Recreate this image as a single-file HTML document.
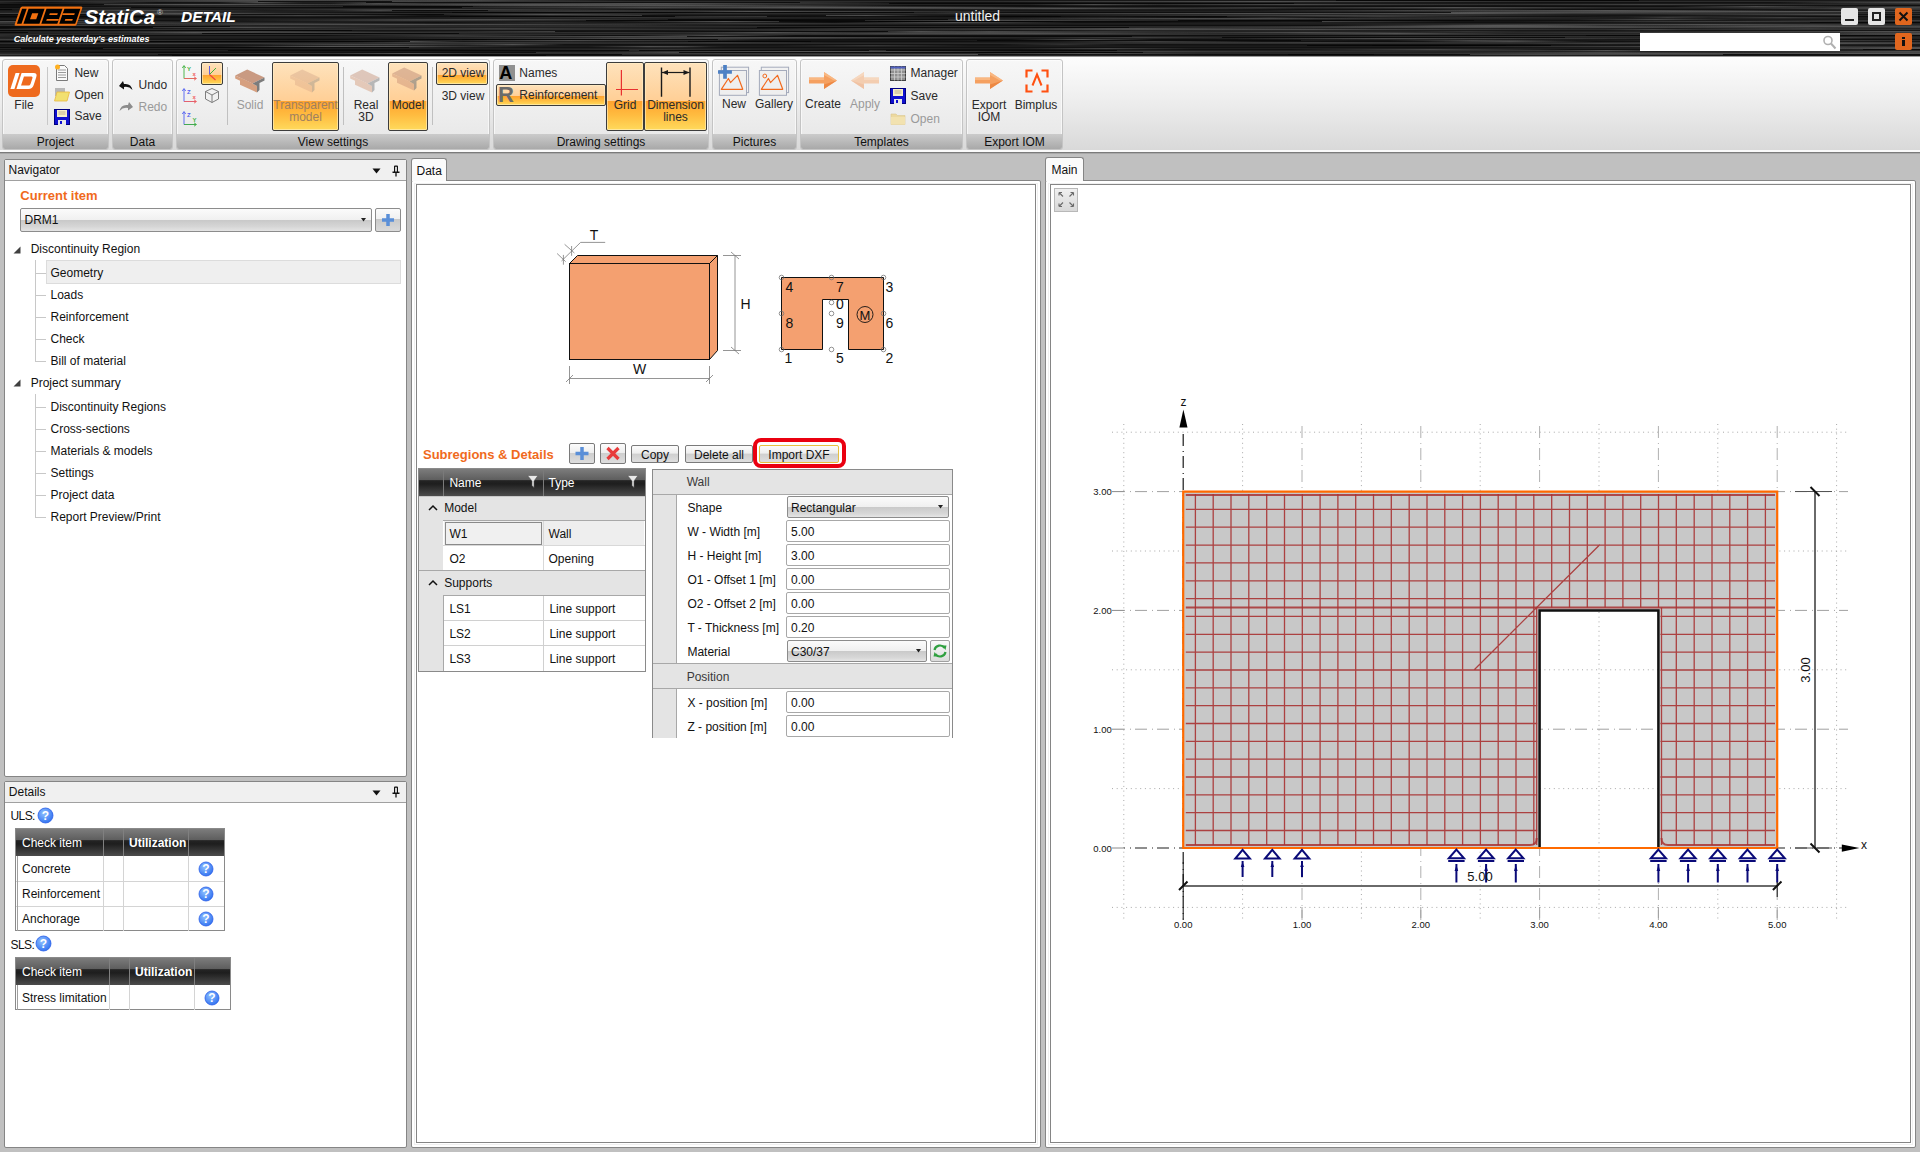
<!DOCTYPE html><html><head><meta charset="utf-8"><title>IDEA StatiCa Detail</title><style>
html,body{margin:0;padding:0}
body{width:1920px;height:1152px;position:relative;overflow:hidden;background:#c0c0c0;font-family:"Liberation Sans",sans-serif;font-size:12px}
.a{position:absolute;box-sizing:border-box}
.t{position:absolute;white-space:nowrap;line-height:normal}
svg.a{overflow:visible}
</style></head><body>
<div class="a" style="left:0px;top:0px;width:1920px;height:56px;background:#1c1c1c;"></div>
<svg class="a" style="left:0px;top:0px;overflow:hidden;" width="1920" height="56" viewBox="0 0 1920 56"><defs><linearGradient id="sg"><stop offset="0" stop-color="#5a5a5a" stop-opacity="0"/><stop offset="0.5" stop-color="#5a5a5a"/><stop offset="1" stop-color="#5a5a5a" stop-opacity="0"/></linearGradient></defs><rect x="0" y="0" width="1920" height="1" fill="rgb(24,24,24)"/><rect x="0" y="1" width="1920" height="1" fill="rgb(44,44,44)"/><rect x="0" y="2" width="1920" height="1" fill="rgb(18,18,18)"/><rect x="0" y="3" width="1920" height="1" fill="rgb(26,26,26)"/><rect x="0" y="4" width="1920" height="1" fill="rgb(34,34,34)"/><rect x="0" y="5" width="1920" height="1" fill="rgb(15,15,15)"/><rect x="0" y="6" width="1920" height="1" fill="rgb(16,16,16)"/><rect x="0" y="7" width="1920" height="1" fill="rgb(40,40,40)"/><rect x="0" y="8" width="1920" height="1" fill="rgb(31,31,31)"/><rect x="0" y="9" width="1920" height="1" fill="rgb(17,17,17)"/><rect x="0" y="10" width="1920" height="1" fill="rgb(25,25,25)"/><rect x="0" y="11" width="1920" height="1" fill="rgb(32,32,32)"/><rect x="0" y="12" width="1920" height="1" fill="rgb(15,15,15)"/><rect x="0" y="13" width="1920" height="1" fill="rgb(43,43,43)"/><rect x="0" y="14" width="1920" height="1" fill="rgb(30,30,30)"/><rect x="0" y="15" width="1920" height="1" fill="rgb(20,20,20)"/><rect x="0" y="16" width="1920" height="1" fill="rgb(15,15,15)"/><rect x="0" y="17" width="1920" height="1" fill="rgb(16,16,16)"/><rect x="0" y="18" width="1920" height="1" fill="rgb(27,27,27)"/><rect x="0" y="19" width="1920" height="1" fill="rgb(27,27,27)"/><rect x="0" y="20" width="1920" height="1" fill="rgb(16,16,16)"/><rect x="0" y="21" width="1920" height="1" fill="rgb(21,21,21)"/><rect x="0" y="22" width="1920" height="1" fill="rgb(16,16,16)"/><rect x="0" y="23" width="1920" height="1" fill="rgb(31,31,31)"/><rect x="0" y="24" width="1920" height="1" fill="rgb(27,27,27)"/><rect x="0" y="25" width="1920" height="1" fill="rgb(15,15,15)"/><rect x="0" y="26" width="1920" height="1" fill="rgb(40,40,40)"/><rect x="0" y="27" width="1920" height="1" fill="rgb(32,32,32)"/><rect x="0" y="28" width="1920" height="1" fill="rgb(17,17,17)"/><rect x="0" y="29" width="1920" height="1" fill="rgb(44,44,44)"/><rect x="0" y="30" width="1920" height="1" fill="rgb(21,21,21)"/><rect x="0" y="31" width="1920" height="1" fill="rgb(34,34,34)"/><rect x="0" y="32" width="1920" height="1" fill="rgb(34,34,34)"/><rect x="0" y="33" width="1920" height="1" fill="rgb(32,32,32)"/><rect x="0" y="34" width="1920" height="1" fill="rgb(44,44,44)"/><rect x="0" y="35" width="1920" height="1" fill="rgb(15,15,15)"/><rect x="0" y="36" width="1920" height="1" fill="rgb(32,32,32)"/><rect x="0" y="37" width="1920" height="1" fill="rgb(32,32,32)"/><rect x="0" y="38" width="1920" height="1" fill="rgb(26,26,26)"/><rect x="0" y="39" width="1920" height="1" fill="rgb(15,15,15)"/><rect x="0" y="40" width="1920" height="1" fill="rgb(21,21,21)"/><rect x="0" y="41" width="1920" height="1" fill="rgb(15,15,15)"/><rect x="0" y="42" width="1920" height="1" fill="rgb(31,31,31)"/><rect x="0" y="43" width="1920" height="1" fill="rgb(41,41,41)"/><rect x="0" y="44" width="1920" height="1" fill="rgb(18,18,18)"/><rect x="0" y="45" width="1920" height="1" fill="rgb(23,23,23)"/><rect x="0" y="46" width="1920" height="1" fill="rgb(27,27,27)"/><rect x="0" y="47" width="1920" height="1" fill="rgb(18,18,18)"/><rect x="0" y="48" width="1920" height="1" fill="rgb(31,31,31)"/><rect x="0" y="49" width="1920" height="1" fill="rgb(17,17,17)"/><rect x="0" y="50" width="1920" height="1" fill="rgb(32,32,32)"/><rect x="0" y="51" width="1920" height="1" fill="rgb(23,23,23)"/><rect x="0" y="52" width="1920" height="1" fill="rgb(31,31,31)"/><rect x="0" y="53" width="1920" height="1" fill="rgb(40,40,40)"/><rect x="0" y="54" width="1920" height="1" fill="rgb(35,35,35)"/><rect x="0" y="55" width="1920" height="1" fill="rgb(19,19,19)"/><rect x="569" y="6" width="461" height="1.3" fill="url(#sg)" opacity="0.63"/><rect x="44" y="4" width="290" height="1.3" fill="url(#sg)" opacity="0.71"/><rect x="1086" y="27" width="556" height="1.3" fill="url(#sg)" opacity="0.52"/><rect x="536" y="15" width="329" height="1.3" fill="url(#sg)" opacity="0.64"/><rect x="1827" y="33" width="431" height="1.3" fill="url(#sg)" opacity="0.47"/><rect x="283" y="4" width="508" height="1.3" fill="url(#sg)" opacity="0.75"/><rect x="1802" y="9" width="511" height="1.3" fill="url(#sg)" opacity="0.88"/><rect x="1085" y="4" width="428" height="1.3" fill="url(#sg)" opacity="0.66"/><rect x="1668" y="37" width="150" height="1.3" fill="url(#sg)" opacity="0.87"/><rect x="66" y="30" width="142" height="1.3" fill="url(#sg)" opacity="0.69"/><rect x="1625" y="43" width="371" height="1.3" fill="url(#sg)" opacity="0.83"/><rect x="-108" y="22" width="552" height="1.3" fill="url(#sg)" opacity="0.40"/><rect x="1822" y="7" width="140" height="1.3" fill="url(#sg)" opacity="0.76"/><rect x="814" y="8" width="487" height="1.3" fill="url(#sg)" opacity="0.85"/><rect x="130" y="31" width="250" height="1.3" fill="url(#sg)" opacity="0.54"/><rect x="360" y="17" width="520" height="1.3" fill="url(#sg)" opacity="0.47"/><rect x="1269" y="26" width="469" height="1.3" fill="url(#sg)" opacity="0.39"/><rect x="419" y="11" width="317" height="1.3" fill="url(#sg)" opacity="0.31"/><rect x="546" y="53" width="349" height="1.3" fill="url(#sg)" opacity="0.30"/><rect x="1312" y="26" width="406" height="1.3" fill="url(#sg)" opacity="0.71"/><rect x="21" y="32" width="547" height="1.3" fill="url(#sg)" opacity="0.54"/><rect x="1414" y="25" width="186" height="1.3" fill="url(#sg)" opacity="0.68"/><rect x="580" y="3" width="148" height="1.3" fill="url(#sg)" opacity="0.56"/><rect x="1192" y="7" width="133" height="1.3" fill="url(#sg)" opacity="0.30"/><rect x="215" y="9" width="452" height="1.3" fill="url(#sg)" opacity="0.34"/><rect x="1341" y="13" width="232" height="1.3" fill="url(#sg)" opacity="0.87"/><rect x="1291" y="38" width="565" height="1.3" fill="url(#sg)" opacity="0.37"/><rect x="1708" y="31" width="571" height="1.3" fill="url(#sg)" opacity="0.49"/><rect x="218" y="9" width="430" height="1.3" fill="url(#sg)" opacity="0.59"/><rect x="461" y="44" width="103" height="1.3" fill="url(#sg)" opacity="0.87"/><rect x="1281" y="33" width="230" height="1.3" fill="url(#sg)" opacity="0.85"/><rect x="1020" y="48" width="173" height="1.3" fill="url(#sg)" opacity="0.61"/><rect x="1256" y="10" width="308" height="1.3" fill="url(#sg)" opacity="0.62"/><rect x="1150" y="32" width="308" height="1.3" fill="url(#sg)" opacity="0.78"/><rect x="1441" y="52" width="312" height="1.3" fill="url(#sg)" opacity="0.61"/><rect x="-82" y="22" width="108" height="1.3" fill="url(#sg)" opacity="0.58"/><rect x="1210" y="12" width="537" height="1.3" fill="url(#sg)" opacity="0.87"/><rect x="129" y="23" width="305" height="1.3" fill="url(#sg)" opacity="0.44"/><rect x="1183" y="12" width="289" height="1.3" fill="url(#sg)" opacity="0.67"/><rect x="-193" y="39" width="570" height="1.3" fill="url(#sg)" opacity="0.78"/><rect x="291" y="5" width="477" height="1.3" fill="url(#sg)" opacity="0.59"/><rect x="1577" y="11" width="420" height="1.3" fill="url(#sg)" opacity="0.78"/><rect x="1421" y="46" width="554" height="1.3" fill="url(#sg)" opacity="0.75"/><rect x="450" y="5" width="254" height="1.3" fill="url(#sg)" opacity="0.32"/><rect x="1706" y="37" width="229" height="1.3" fill="url(#sg)" opacity="0.69"/><rect x="438" y="22" width="214" height="1.3" fill="url(#sg)" opacity="0.31"/><rect x="220" y="46" width="222" height="1.3" fill="url(#sg)" opacity="0.89"/><rect x="664" y="12" width="108" height="1.3" fill="url(#sg)" opacity="0.43"/><rect x="785" y="32" width="413" height="1.3" fill="url(#sg)" opacity="0.63"/><rect x="336" y="53" width="142" height="1.3" fill="url(#sg)" opacity="0.84"/><rect x="1522" y="42" width="593" height="1.3" fill="url(#sg)" opacity="0.62"/><rect x="1891" y="33" width="99" height="1.3" fill="url(#sg)" opacity="0.77"/><rect x="-184" y="38" width="233" height="1.3" fill="url(#sg)" opacity="0.38"/><rect x="292" y="39" width="143" height="1.3" fill="url(#sg)" opacity="0.71"/><rect x="1776" y="33" width="188" height="1.3" fill="url(#sg)" opacity="0.33"/><rect x="934" y="12" width="123" height="1.3" fill="url(#sg)" opacity="0.60"/><rect x="-86" y="35" width="144" height="1.3" fill="url(#sg)" opacity="0.50"/><rect x="1897" y="32" width="284" height="1.3" fill="url(#sg)" opacity="0.57"/><rect x="1758" y="34" width="599" height="1.3" fill="url(#sg)" opacity="0.72"/><rect x="629" y="16" width="538" height="1.3" fill="url(#sg)" opacity="0.55"/><rect x="1610" y="25" width="403" height="1.3" fill="url(#sg)" opacity="0.70"/><rect x="99" y="27" width="297" height="1.3" fill="url(#sg)" opacity="0.77"/><rect x="432" y="49" width="454" height="1.3" fill="url(#sg)" opacity="0.45"/><rect x="1715" y="8" width="304" height="1.3" fill="url(#sg)" opacity="0.54"/><rect x="466" y="31" width="309" height="1.3" fill="url(#sg)" opacity="0.72"/><rect x="1454" y="32" width="427" height="1.3" fill="url(#sg)" opacity="0.42"/><rect x="177" y="20" width="454" height="1.3" fill="url(#sg)" opacity="0.50"/><rect x="1604" y="29" width="98" height="1.3" fill="url(#sg)" opacity="0.50"/><rect x="1010" y="39" width="145" height="1.3" fill="url(#sg)" opacity="0.89"/><rect x="736" y="50" width="187" height="1.3" fill="url(#sg)" opacity="0.46"/><rect x="543" y="2" width="356" height="1.3" fill="url(#sg)" opacity="0.79"/><rect x="859" y="54" width="495" height="1.3" fill="url(#sg)" opacity="0.62"/><rect x="1825" y="32" width="414" height="1.3" fill="url(#sg)" opacity="0.47"/><rect x="550" y="51" width="515" height="1.3" fill="url(#sg)" opacity="0.46"/><rect x="162" y="1" width="346" height="1.3" fill="url(#sg)" opacity="0.66"/><rect x="72" y="14" width="350" height="1.3" fill="url(#sg)" opacity="0.57"/><rect x="1511" y="21" width="354" height="1.3" fill="url(#sg)" opacity="0.33"/><rect x="776" y="45" width="192" height="1.3" fill="url(#sg)" opacity="0.46"/><rect x="626" y="11" width="399" height="1.3" fill="url(#sg)" opacity="0.62"/><rect x="987" y="13" width="536" height="1.3" fill="url(#sg)" opacity="0.70"/><rect x="1221" y="17" width="98" height="1.3" fill="url(#sg)" opacity="0.32"/><rect x="1871" y="1" width="274" height="1.3" fill="url(#sg)" opacity="0.58"/><rect x="235" y="28" width="522" height="1.3" fill="url(#sg)" opacity="0.63"/><rect x="1875" y="25" width="395" height="1.3" fill="url(#sg)" opacity="0.89"/><rect x="613" y="21" width="223" height="1.3" fill="url(#sg)" opacity="0.89"/><rect x="331" y="3" width="94" height="1.3" fill="url(#sg)" opacity="0.68"/><rect x="1564" y="16" width="247" height="1.3" fill="url(#sg)" opacity="0.35"/><rect x="1360" y="53" width="598" height="1.3" fill="url(#sg)" opacity="0.66"/><rect x="1000" y="44" width="126" height="1.3" fill="url(#sg)" opacity="0.41"/><rect x="1626" y="17" width="83" height="1.3" fill="url(#sg)" opacity="0.52"/><rect x="1125" y="21" width="330" height="1.3" fill="url(#sg)" opacity="0.88"/><rect x="692" y="19" width="445" height="1.3" fill="url(#sg)" opacity="0.30"/><rect x="143" y="24" width="566" height="1.3" fill="url(#sg)" opacity="0.60"/><rect x="816" y="12" width="596" height="1.3" fill="url(#sg)" opacity="0.35"/><rect x="167" y="52" width="227" height="1.3" fill="url(#sg)" opacity="0.65"/><rect x="-108" y="25" width="386" height="1.3" fill="url(#sg)" opacity="0.68"/><rect x="435" y="5" width="478" height="1.3" fill="url(#sg)" opacity="0.73"/><rect x="412" y="31" width="370" height="1.3" fill="url(#sg)" opacity="0.33"/><rect x="1558" y="53" width="597" height="1.3" fill="url(#sg)" opacity="0.85"/><rect x="1865" y="48" width="96" height="1.3" fill="url(#sg)" opacity="0.35"/><rect x="345" y="2" width="449" height="1.3" fill="url(#sg)" opacity="0.53"/><rect x="7" y="28" width="99" height="1.3" fill="url(#sg)" opacity="0.71"/><rect x="880" y="31" width="83" height="1.3" fill="url(#sg)" opacity="0.78"/><rect x="1860" y="47" width="174" height="1.3" fill="url(#sg)" opacity="0.34"/><rect x="1740" y="47" width="338" height="1.3" fill="url(#sg)" opacity="0.81"/><rect x="640" y="15" width="316" height="1.3" fill="url(#sg)" opacity="0.60"/><rect x="114" y="24" width="570" height="1.3" fill="url(#sg)" opacity="0.76"/><rect x="612" y="39" width="159" height="1.3" fill="url(#sg)" opacity="0.50"/><rect x="1046" y="41" width="216" height="1.3" fill="url(#sg)" opacity="0.59"/><rect x="900" y="31" width="181" height="1.3" fill="url(#sg)" opacity="0.71"/><rect x="969" y="18" width="555" height="1.3" fill="url(#sg)" opacity="0.58"/><rect x="616" y="7" width="399" height="1.3" fill="url(#sg)" opacity="0.86"/><rect x="986" y="1" width="549" height="1.3" fill="url(#sg)" opacity="0.79"/><rect x="900" y="28" width="476" height="1.3" fill="url(#sg)" opacity="0.85"/><rect x="105" y="13" width="172" height="1.3" fill="url(#sg)" opacity="0.75"/><rect x="1272" y="16" width="215" height="1.3" fill="url(#sg)" opacity="0.47"/><rect x="1295" y="7" width="316" height="1.3" fill="url(#sg)" opacity="0.84"/><rect x="1414" y="31" width="105" height="1.3" fill="url(#sg)" opacity="0.30"/><rect x="1646" y="31" width="495" height="1.3" fill="url(#sg)" opacity="0.74"/><rect x="1208" y="26" width="465" height="1.3" fill="url(#sg)" opacity="0.37"/><rect x="-193" y="21" width="412" height="1.3" fill="url(#sg)" opacity="0.80"/><rect x="601" y="7" width="92" height="1.3" fill="url(#sg)" opacity="0.45"/><rect x="1409" y="4" width="479" height="1.3" fill="url(#sg)" opacity="0.52"/><rect x="927" y="27" width="129" height="1.3" fill="url(#sg)" opacity="0.36"/><rect x="969" y="53" width="232" height="1.3" fill="url(#sg)" opacity="0.88"/><rect x="1892" y="27" width="403" height="1.3" fill="url(#sg)" opacity="0.76"/><rect x="1552" y="50" width="109" height="1.3" fill="url(#sg)" opacity="0.85"/><rect x="633" y="35" width="162" height="1.3" fill="url(#sg)" opacity="0.86"/><rect x="1646" y="26" width="221" height="1.3" fill="url(#sg)" opacity="0.59"/><rect x="321" y="35" width="254" height="1.3" fill="url(#sg)" opacity="0.55"/><rect x="1019" y="18" width="341" height="1.3" fill="url(#sg)" opacity="0.54"/><rect x="1032" y="15" width="574" height="1.3" fill="url(#sg)" opacity="0.70"/><rect x="485" y="7" width="245" height="1.3" fill="url(#sg)" opacity="0.42"/><rect x="1836" y="51" width="305" height="1.3" fill="url(#sg)" opacity="0.84"/><rect x="1643" y="48" width="517" height="1.3" fill="url(#sg)" opacity="0.63"/><rect x="171" y="15" width="258" height="1.3" fill="url(#sg)" opacity="0.63"/><rect x="779" y="20" width="457" height="1.3" fill="url(#sg)" opacity="0.79"/><rect x="-118" y="12" width="502" height="1.3" fill="url(#sg)" opacity="0.55"/><rect x="660" y="33" width="465" height="1.3" fill="url(#sg)" opacity="0.50"/><rect x="1840" y="3" width="364" height="1.3" fill="url(#sg)" opacity="0.38"/><rect x="684" y="32" width="174" height="1.3" fill="url(#sg)" opacity="0.84"/><rect x="1437" y="24" width="536" height="1.3" fill="url(#sg)" opacity="0.87"/><rect x="-111" y="54" width="210" height="1.3" fill="url(#sg)" opacity="0.56"/><rect x="1738" y="48" width="581" height="1.3" fill="url(#sg)" opacity="0.34"/><rect x="1717" y="52" width="539" height="1.3" fill="url(#sg)" opacity="0.77"/><rect x="432" y="14" width="235" height="1.3" fill="url(#sg)" opacity="0.88"/><rect x="1673" y="6" width="167" height="1.3" fill="url(#sg)" opacity="0.77"/><rect x="314" y="0" width="318" height="1.3" fill="url(#sg)" opacity="0.69"/><rect x="324" y="19" width="337" height="1.3" fill="url(#sg)" opacity="0.68"/><rect x="259" y="44" width="181" height="1.3" fill="url(#sg)" opacity="0.48"/><rect x="585" y="37" width="477" height="1.3" fill="url(#sg)" opacity="0.43"/><rect x="-196" y="38" width="90" height="1.3" fill="url(#sg)" opacity="0.48"/><rect x="941" y="29" width="403" height="1.3" fill="url(#sg)" opacity="0.59"/><rect x="811" y="15" width="109" height="1.3" fill="url(#sg)" opacity="0.72"/><rect x="26" y="19" width="102" height="1.3" fill="url(#sg)" opacity="0.60"/><rect x="1520" y="43" width="163" height="1.3" fill="url(#sg)" opacity="0.44"/><rect x="1316" y="27" width="312" height="1.3" fill="url(#sg)" opacity="0.32"/><rect x="1522" y="21" width="451" height="1.3" fill="url(#sg)" opacity="0.42"/><rect x="996" y="51" width="596" height="1.3" fill="url(#sg)" opacity="0.42"/><rect x="1076" y="12" width="278" height="1.3" fill="url(#sg)" opacity="0.58"/><rect x="1008" y="16" width="191" height="1.3" fill="url(#sg)" opacity="0.67"/><rect x="1786" y="14" width="507" height="1.3" fill="url(#sg)" opacity="0.87"/><rect x="1411" y="9" width="135" height="1.3" fill="url(#sg)" opacity="0.31"/><rect x="381" y="38" width="505" height="1.3" fill="url(#sg)" opacity="0.73"/><rect x="1411" y="11" width="540" height="1.3" fill="url(#sg)" opacity="0.74"/><rect x="478" y="5" width="417" height="1.3" fill="url(#sg)" opacity="0.41"/><rect x="1715" y="33" width="112" height="1.3" fill="url(#sg)" opacity="0.70"/><rect x="1331" y="24" width="419" height="1.3" fill="url(#sg)" opacity="0.40"/><rect x="120" y="0" width="366" height="1.3" fill="url(#sg)" opacity="0.51"/><rect x="649" y="7" width="469" height="1.3" fill="url(#sg)" opacity="0.76"/><rect x="1571" y="19" width="169" height="1.3" fill="url(#sg)" opacity="0.72"/><rect x="1326" y="12" width="537" height="1.3" fill="url(#sg)" opacity="0.49"/><rect x="1743" y="47" width="111" height="1.3" fill="url(#sg)" opacity="0.45"/><rect x="1457" y="40" width="121" height="1.3" fill="url(#sg)" opacity="0.32"/><rect x="53" y="4" width="343" height="1.3" fill="url(#sg)" opacity="0.75"/><rect x="1188" y="38" width="451" height="1.3" fill="url(#sg)" opacity="0.50"/><rect x="-22" y="39" width="348" height="1.3" fill="url(#sg)" opacity="0.85"/><rect x="-185" y="19" width="146" height="1.3" fill="url(#sg)" opacity="0.80"/><rect x="1746" y="6" width="556" height="1.3" fill="url(#sg)" opacity="0.77"/><rect x="1821" y="27" width="215" height="1.3" fill="url(#sg)" opacity="0.41"/><rect x="1042" y="51" width="234" height="1.3" fill="url(#sg)" opacity="0.50"/><rect x="1687" y="20" width="450" height="1.3" fill="url(#sg)" opacity="0.61"/><rect x="455" y="25" width="333" height="1.3" fill="url(#sg)" opacity="0.34"/><rect x="1773" y="2" width="413" height="1.3" fill="url(#sg)" opacity="0.89"/><rect x="95" y="6" width="351" height="1.3" fill="url(#sg)" opacity="0.43"/><rect x="1841" y="26" width="537" height="1.3" fill="url(#sg)" opacity="0.44"/><rect x="1687" y="26" width="320" height="1.3" fill="url(#sg)" opacity="0.81"/><rect x="296" y="42" width="380" height="1.3" fill="url(#sg)" opacity="0.47"/><rect x="1327" y="17" width="340" height="1.3" fill="url(#sg)" opacity="0.42"/><rect x="560" y="15" width="331" height="1.3" fill="url(#sg)" opacity="0.39"/><rect x="571" y="37" width="414" height="1.3" fill="url(#sg)" opacity="0.54"/><rect x="1878" y="15" width="316" height="1.3" fill="url(#sg)" opacity="0.69"/><rect x="219" y="2" width="84" height="1.3" fill="url(#sg)" opacity="0.83"/><rect x="1636" y="14" width="462" height="1.3" fill="url(#sg)" opacity="0.83"/><rect x="288" y="14" width="131" height="1.3" fill="url(#sg)" opacity="0.66"/><rect x="595" y="52" width="156" height="1.3" fill="url(#sg)" opacity="0.61"/><rect x="1639" y="11" width="346" height="1.3" fill="url(#sg)" opacity="0.36"/><rect x="1232" y="38" width="302" height="1.3" fill="url(#sg)" opacity="0.52"/><rect x="-20" y="9" width="288" height="1.3" fill="url(#sg)" opacity="0.32"/><rect x="633" y="46" width="91" height="1.3" fill="url(#sg)" opacity="0.55"/><rect x="558" y="23" width="399" height="1.3" fill="url(#sg)" opacity="0.42"/><rect x="1830" y="50" width="575" height="1.3" fill="url(#sg)" opacity="0.54"/><rect x="1419" y="50" width="238" height="1.3" fill="url(#sg)" opacity="0.35"/><rect x="1429" y="10" width="357" height="1.3" fill="url(#sg)" opacity="0.89"/><rect x="1059" y="42" width="507" height="1.3" fill="url(#sg)" opacity="0.49"/><rect x="1263" y="36" width="504" height="1.3" fill="url(#sg)" opacity="0.31"/><rect x="1290" y="49" width="281" height="1.3" fill="url(#sg)" opacity="0.74"/><rect x="-176" y="13" width="524" height="1.3" fill="url(#sg)" opacity="0.55"/><rect x="170" y="52" width="495" height="1.3" fill="url(#sg)" opacity="0.58"/><rect x="332" y="10" width="95" height="1.3" fill="url(#sg)" opacity="0.63"/><rect x="1424" y="41" width="171" height="1.3" fill="url(#sg)" opacity="0.74"/><rect x="397" y="10" width="436" height="1.3" fill="url(#sg)" opacity="0.40"/><rect x="74" y="10" width="191" height="1.3" fill="url(#sg)" opacity="0.59"/><rect x="608" y="51" width="388" height="1.3" fill="url(#sg)" opacity="0.80"/><rect x="1777" y="2" width="402" height="1.3" fill="url(#sg)" opacity="0.66"/><rect x="1388" y="40" width="168" height="1.3" fill="url(#sg)" opacity="0.68"/><rect x="709" y="54" width="494" height="1.3" fill="url(#sg)" opacity="0.80"/><rect x="693" y="11" width="122" height="1.3" fill="url(#sg)" opacity="0.86"/><rect x="1371" y="10" width="447" height="1.3" fill="url(#sg)" opacity="0.39"/><rect x="588" y="46" width="122" height="1.3" fill="url(#sg)" opacity="0.81"/><rect x="-44" y="43" width="411" height="1.3" fill="url(#sg)" opacity="0.53"/><rect x="1054" y="29" width="510" height="1.3" fill="url(#sg)" opacity="0.65"/><rect x="1394" y="27" width="456" height="1.3" fill="url(#sg)" opacity="0.60"/><rect x="-105" y="11" width="83" height="1.3" fill="url(#sg)" opacity="0.58"/><rect x="1677" y="28" width="263" height="1.3" fill="url(#sg)" opacity="0.54"/><rect x="326" y="4" width="447" height="1.3" fill="url(#sg)" opacity="0.52"/><rect x="1610" y="51" width="596" height="1.3" fill="url(#sg)" opacity="0.69"/><rect x="333" y="2" width="164" height="1.3" fill="url(#sg)" opacity="0.77"/><rect x="127" y="32" width="135" height="1.3" fill="url(#sg)" opacity="0.84"/><rect x="357" y="41" width="106" height="1.3" fill="url(#sg)" opacity="0.90"/><rect x="248" y="46" width="278" height="1.3" fill="url(#sg)" opacity="0.89"/><rect x="979" y="31" width="249" height="1.3" fill="url(#sg)" opacity="0.34"/><rect x="833" y="22" width="242" height="1.3" fill="url(#sg)" opacity="0.84"/><rect x="1669" y="17" width="227" height="1.3" fill="url(#sg)" opacity="0.60"/><rect x="653" y="30" width="349" height="1.3" fill="url(#sg)" opacity="0.44"/><rect x="-50" y="23" width="283" height="1.3" fill="url(#sg)" opacity="0.54"/><rect x="939" y="40" width="415" height="1.3" fill="url(#sg)" opacity="0.40"/><rect x="882" y="50" width="197" height="1.3" fill="url(#sg)" opacity="0.33"/><rect x="1273" y="54" width="543" height="1.3" fill="url(#sg)" opacity="0.61"/><rect x="228" y="44" width="338" height="1.3" fill="url(#sg)" opacity="0.68"/><rect x="1321" y="25" width="351" height="1.3" fill="url(#sg)" opacity="0.89"/><rect x="398" y="36" width="448" height="1.3" fill="url(#sg)" opacity="0.76"/><rect x="742" y="28" width="260" height="1.3" fill="url(#sg)" opacity="0.48"/><rect x="838" y="33" width="397" height="1.3" fill="url(#sg)" opacity="0.74"/><rect x="-62" y="47" width="306" height="1.3" fill="url(#sg)" opacity="0.47"/><rect x="1570" y="40" width="507" height="1.3" fill="url(#sg)" opacity="0.52"/><rect x="340" y="3" width="580" height="1.3" fill="url(#sg)" opacity="0.67"/><rect x="-109" y="2" width="135" height="1.3" fill="url(#sg)" opacity="0.64"/><rect x="235" y="19" width="445" height="1.3" fill="url(#sg)" opacity="0.43"/><rect x="1033" y="37" width="216" height="1.3" fill="url(#sg)" opacity="0.52"/><rect x="1745" y="53" width="242" height="1.3" fill="url(#sg)" opacity="0.31"/><rect x="797" y="51" width="232" height="1.3" fill="url(#sg)" opacity="0.36"/><rect x="392" y="40" width="356" height="1.3" fill="url(#sg)" opacity="0.79"/><rect x="29" y="0" width="438" height="1.3" fill="url(#sg)" opacity="0.66"/><rect x="1818" y="33" width="334" height="1.3" fill="url(#sg)" opacity="0.84"/><rect x="52" y="2" width="105" height="1.3" fill="url(#sg)" opacity="0.41"/><rect x="39" y="10" width="187" height="1.3" fill="url(#sg)" opacity="0.67"/><rect x="607" y="42" width="225" height="1.3" fill="url(#sg)" opacity="0.42"/><rect x="1876" y="38" width="505" height="1.3" fill="url(#sg)" opacity="0.61"/><rect x="1029" y="4" width="129" height="1.3" fill="url(#sg)" opacity="0.73"/><rect x="1336" y="0" width="303" height="1" fill="#050505" opacity="0.8"/><rect x="1705" y="47" width="121" height="1" fill="#050505" opacity="0.8"/><rect x="1653" y="47" width="169" height="1" fill="#050505" opacity="0.8"/><rect x="231" y="14" width="213" height="1" fill="#050505" opacity="0.8"/><rect x="-42" y="14" width="143" height="1" fill="#050505" opacity="0.8"/><rect x="878" y="21" width="444" height="1" fill="#050505" opacity="0.8"/><rect x="889" y="3" width="405" height="1" fill="#050505" opacity="0.8"/><rect x="1586" y="35" width="431" height="1" fill="#050505" opacity="0.8"/><rect x="886" y="50" width="231" height="1" fill="#050505" opacity="0.8"/><rect x="688" y="41" width="123" height="1" fill="#050505" opacity="0.8"/><rect x="-138" y="32" width="166" height="1" fill="#050505" opacity="0.8"/><rect x="767" y="16" width="460" height="1" fill="#050505" opacity="0.8"/><rect x="452" y="12" width="462" height="1" fill="#050505" opacity="0.8"/><rect x="586" y="20" width="279" height="1" fill="#050505" opacity="0.8"/><rect x="779" y="21" width="274" height="1" fill="#050505" opacity="0.8"/><rect x="1723" y="54" width="321" height="1" fill="#050505" opacity="0.8"/><rect x="-174" y="53" width="93" height="1" fill="#050505" opacity="0.8"/><rect x="757" y="27" width="372" height="1" fill="#050505" opacity="0.8"/><rect x="668" y="19" width="280" height="1" fill="#050505" opacity="0.8"/><rect x="118" y="39" width="369" height="1" fill="#050505" opacity="0.8"/><rect x="392" y="10" width="96" height="1" fill="#050505" opacity="0.8"/><rect x="258" y="1" width="134" height="1" fill="#050505" opacity="0.8"/><rect x="462" y="39" width="256" height="1" fill="#050505" opacity="0.8"/><rect x="-83" y="9" width="95" height="1" fill="#050505" opacity="0.8"/><rect x="366" y="2" width="434" height="1" fill="#050505" opacity="0.8"/><rect x="-26" y="41" width="436" height="1" fill="#050505" opacity="0.8"/><rect x="-9" y="4" width="113" height="1" fill="#050505" opacity="0.8"/><rect x="1288" y="54" width="182" height="1" fill="#050505" opacity="0.8"/><rect x="70" y="52" width="466" height="1" fill="#050505" opacity="0.8"/><rect x="1372" y="45" width="134" height="1" fill="#050505" opacity="0.8"/><rect x="642" y="15" width="184" height="1" fill="#050505" opacity="0.8"/><rect x="-62" y="7" width="97" height="1" fill="#050505" opacity="0.8"/><rect x="158" y="54" width="464" height="1" fill="#050505" opacity="0.8"/><rect x="977" y="40" width="324" height="1" fill="#050505" opacity="0.8"/><rect x="343" y="6" width="130" height="1" fill="#050505" opacity="0.8"/><rect x="639" y="50" width="230" height="1" fill="#050505" opacity="0.8"/><rect x="1178" y="20" width="296" height="1" fill="#050505" opacity="0.8"/><rect x="-115" y="16" width="259" height="1" fill="#050505" opacity="0.8"/><rect x="957" y="16" width="104" height="1" fill="#050505" opacity="0.8"/><rect x="1307" y="45" width="244" height="1" fill="#050505" opacity="0.8"/><rect x="1863" y="49" width="323" height="1" fill="#050505" opacity="0.8"/><rect x="978" y="54" width="396" height="1" fill="#050505" opacity="0.8"/><rect x="-74" y="47" width="483" height="1" fill="#050505" opacity="0.8"/><rect x="-73" y="26" width="303" height="1" fill="#050505" opacity="0.8"/><rect x="202" y="33" width="257" height="1" fill="#050505" opacity="0.8"/><rect x="-3" y="30" width="355" height="1" fill="#050505" opacity="0.8"/><rect x="687" y="36" width="445" height="1" fill="#050505" opacity="0.8"/><rect x="172" y="55" width="374" height="1" fill="#050505" opacity="0.8"/><rect x="976" y="52" width="167" height="1" fill="#050505" opacity="0.8"/><rect x="-195" y="27" width="348" height="1" fill="#050505" opacity="0.8"/><rect x="981" y="12" width="470" height="1" fill="#050505" opacity="0.8"/><rect x="21" y="48" width="82" height="1" fill="#050505" opacity="0.8"/><rect x="1810" y="22" width="128" height="1" fill="#050505" opacity="0.8"/><rect x="555" y="31" width="333" height="1" fill="#050505" opacity="0.8"/><rect x="1222" y="37" width="343" height="1" fill="#050505" opacity="0.8"/><rect x="450" y="16" width="225" height="1" fill="#050505" opacity="0.8"/><rect x="679" y="52" width="438" height="1" fill="#050505" opacity="0.8"/><rect x="1841" y="14" width="164" height="1" fill="#050505" opacity="0.8"/><rect x="131" y="7" width="331" height="1" fill="#050505" opacity="0.8"/><rect x="228" y="50" width="401" height="1" fill="#050505" opacity="0.8"/></svg>
<svg class="a" style="left:0px;top:0px;" width="100" height="30" viewBox="0 0 100 30"><g transform="translate(0,25.75) skewX(-19)">
<rect x="14.2" y="-19.2" width="62" height="19.2" rx="1.5" fill="#f07010"/>
<rect x="16.2" y="-17.1" width="4.6" height="15" fill="#000"/>
<rect x="22.7" y="-17.1" width="16" height="15" fill="#000"/>
<rect x="27.8" y="-12.6" width="6.2" height="6.2" fill="#f07010"/>
<rect x="40.6" y="-17.1" width="16" height="15" fill="#000"/>
<rect x="45.5" y="-12.6" width="8" height="1.8" fill="#f07010"/>
<rect x="44.5" y="-6.8" width="12.1" height="1.8" fill="#f07010"/>
<rect x="58.5" y="-17.1" width="16" height="15" fill="#000"/>
<rect x="58.5" y="-12.6" width="12" height="1.8" fill="#f07010"/>
<rect x="63" y="-6.8" width="7.5" height="1.8" fill="#f07010"/>
</g></svg>
<div class="t" style="left:84.5px;top:4.8px;font-size:20.5px;color:#fff;font-weight:bold;font-style:italic;">StatiCa</div>
<div class="t" style="left:157.0px;top:7.8px;font-size:8px;color:#ccc;">&reg;</div>
<div class="t" style="left:181.0px;top:7.5px;font-size:15.5px;color:#fff;font-weight:bold;font-style:italic;">DETAIL</div>
<div class="t" style="left:13.7px;top:33.6px;font-size:9px;color:#fff;font-weight:bold;font-style:italic;">Calculate yesterday&#39;s estimates</div>
<div class="t" style="left:877.5px;top:7.8px;width:200px;text-align:center;font-size:14px;color:#f0f0f0;">untitled</div>
<div class="a" style="left:1841px;top:8px;width:17px;height:17px;background:#e6e6e6;border-radius:2px;"></div>
<div class="a" style="left:1845px;top:19px;width:9px;height:2px;background:#222;"></div>
<div class="a" style="left:1868px;top:8px;width:17px;height:17px;background:#e6e6e6;border-radius:2px;"></div>
<div class="a" style="left:1872px;top:12px;width:9px;height:9px;border:2px solid #222;"></div>
<div class="a" style="left:1895px;top:8px;width:17px;height:17px;background:#e0661e;border-radius:2px;"></div>
<svg class="a" style="left:1895px;top:8px;" width="17" height="17" viewBox="0 0 17 17"><path d="M4.5 4.5 L12.5 12.5 M12.5 4.5 L4.5 12.5" stroke="#111" stroke-width="2"/></svg>
<div class="a" style="left:1640px;top:33px;width:200px;height:18px;background:#fff;"></div>
<svg class="a" style="left:1820px;top:33px;" width="20" height="18" viewBox="0 0 20 18"><circle cx="8" cy="7.5" r="4" fill="none" stroke="#b0b0b0" stroke-width="1.6"/><path d="M11 10.5 L15.5 15.5" stroke="#b0b0b0" stroke-width="2"/></svg>
<div class="a" style="left:1895px;top:33px;width:17px;height:17px;background:#e0661e;border-radius:2px;"></div>
<div class="a" style="left:1902px;top:37px;width:3px;height:2px;background:#111;"></div>
<div class="a" style="left:1902px;top:40px;width:3px;height:6px;background:#111;"></div>
<div class="a" style="left:0px;top:56px;width:1920px;height:1px;background:#9a9a9a;"></div>
<div class="a" style="left:0px;top:57px;width:1920px;height:95px;background:linear-gradient(180deg,#fdfdfd 0%,#eeeeee 45%,#d8d8d8 100%);"></div>
<div class="a" style="left:0px;top:150px;width:1920px;height:2px;background:#fafafa;"></div>
<div class="a" style="left:0px;top:152px;width:1920px;height:1px;background:#7a7a7a;"></div>
<div class="a" style="left:0px;top:153px;width:1920px;height:1px;background:#a8a8a8;"></div>
<div class="a" style="left:2px;top:59px;width:107px;height:91px;border:1px solid #c4c4c4;border-radius:3px;background:linear-gradient(180deg,#f7f7f7 0%,#efefef 50%,#e6e6e6 100%);box-shadow:inset 0 0 0 1px rgba(255,255,255,0.6);"></div>
<div class="a" style="left:3px;top:134px;width:105px;height:15px;background:linear-gradient(180deg,#cbcbcb,#a9a9a9);border-radius:0 0 2px 2px;"></div>
<div class="t" style="left:-44.5px;top:135.3px;width:200px;text-align:center;font-size:12px;color:#111;">Project</div>
<div class="a" style="left:112px;top:59px;width:61px;height:91px;border:1px solid #c4c4c4;border-radius:3px;background:linear-gradient(180deg,#f7f7f7 0%,#efefef 50%,#e6e6e6 100%);box-shadow:inset 0 0 0 1px rgba(255,255,255,0.6);"></div>
<div class="a" style="left:113px;top:134px;width:59px;height:15px;background:linear-gradient(180deg,#cbcbcb,#a9a9a9);border-radius:0 0 2px 2px;"></div>
<div class="t" style="left:42.5px;top:135.3px;width:200px;text-align:center;font-size:12px;color:#111;">Data</div>
<div class="a" style="left:176px;top:59px;width:314px;height:91px;border:1px solid #c4c4c4;border-radius:3px;background:linear-gradient(180deg,#f7f7f7 0%,#efefef 50%,#e6e6e6 100%);box-shadow:inset 0 0 0 1px rgba(255,255,255,0.6);"></div>
<div class="a" style="left:177px;top:134px;width:312px;height:15px;background:linear-gradient(180deg,#cbcbcb,#a9a9a9);border-radius:0 0 2px 2px;"></div>
<div class="t" style="left:233.0px;top:135.3px;width:200px;text-align:center;font-size:12px;color:#111;">View settings</div>
<div class="a" style="left:493px;top:59px;width:216px;height:91px;border:1px solid #c4c4c4;border-radius:3px;background:linear-gradient(180deg,#f7f7f7 0%,#efefef 50%,#e6e6e6 100%);box-shadow:inset 0 0 0 1px rgba(255,255,255,0.6);"></div>
<div class="a" style="left:494px;top:134px;width:214px;height:15px;background:linear-gradient(180deg,#cbcbcb,#a9a9a9);border-radius:0 0 2px 2px;"></div>
<div class="t" style="left:501.0px;top:135.3px;width:200px;text-align:center;font-size:12px;color:#111;">Drawing settings</div>
<div class="a" style="left:712px;top:59px;width:85px;height:91px;border:1px solid #c4c4c4;border-radius:3px;background:linear-gradient(180deg,#f7f7f7 0%,#efefef 50%,#e6e6e6 100%);box-shadow:inset 0 0 0 1px rgba(255,255,255,0.6);"></div>
<div class="a" style="left:713px;top:134px;width:83px;height:15px;background:linear-gradient(180deg,#cbcbcb,#a9a9a9);border-radius:0 0 2px 2px;"></div>
<div class="t" style="left:654.5px;top:135.3px;width:200px;text-align:center;font-size:12px;color:#111;">Pictures</div>
<div class="a" style="left:800px;top:59px;width:163px;height:91px;border:1px solid #c4c4c4;border-radius:3px;background:linear-gradient(180deg,#f7f7f7 0%,#efefef 50%,#e6e6e6 100%);box-shadow:inset 0 0 0 1px rgba(255,255,255,0.6);"></div>
<div class="a" style="left:801px;top:134px;width:161px;height:15px;background:linear-gradient(180deg,#cbcbcb,#a9a9a9);border-radius:0 0 2px 2px;"></div>
<div class="t" style="left:781.5px;top:135.3px;width:200px;text-align:center;font-size:12px;color:#111;">Templates</div>
<div class="a" style="left:966px;top:59px;width:97px;height:91px;border:1px solid #c4c4c4;border-radius:3px;background:linear-gradient(180deg,#f7f7f7 0%,#efefef 50%,#e6e6e6 100%);box-shadow:inset 0 0 0 1px rgba(255,255,255,0.6);"></div>
<div class="a" style="left:967px;top:134px;width:95px;height:15px;background:linear-gradient(180deg,#cbcbcb,#a9a9a9);border-radius:0 0 2px 2px;"></div>
<div class="t" style="left:914.5px;top:135.3px;width:200px;text-align:center;font-size:12px;color:#111;">Export IOM</div>
<svg class="a" style="left:8px;top:65px;" width="32" height="32" viewBox="0 0 32 32"><rect x="0" y="0" width="32" height="32" rx="5" fill="#ee6a1e"/><g transform="translate(16,16) skewX(-18)"><rect x="-11" y="-8" width="4" height="16" fill="#fff"/><path d="M-5 -8 H7 Q11 -8 11 -4 V4 Q11 8 7 8 H-5 Z M-1.5 -4.5 V4.5 H6 Q7.5 4.5 7.5 3 V-3 Q7.5 -4.5 6 -4.5 Z" fill="#fff" fill-rule="evenodd"/></g></svg>
<div class="t" style="left:-76.0px;top:97.8px;width:200px;text-align:center;font-size:12px;color:#2a2a2a;">File</div>
<div class="a" style="left:47px;top:67px;width:1px;height:58px;background:#c8c8c8;"></div>
<svg class="a" style="left:54px;top:64px;" width="16" height="17" viewBox="0 0 16 17"><path d="M2.5 1.5 H10.5 L13.5 4.5 V16.5 H2.5 Z" fill="#fafafa" stroke="#7a7a7a"/><path d="M4 6 H12 M4 8.5 H12 M4 11 H12 M4 13.5 H12" stroke="#9a9a9a"/><circle cx="3.5" cy="3" r="2.5" fill="#ffb020"/></svg>
<div class="t" style="left:74.4px;top:65.6px;font-size:12px;color:#2a2a2a;">New</div>
<svg class="a" style="left:54px;top:87px;" width="16" height="15" viewBox="0 0 16 15"><rect x="1" y="1" width="10" height="8" fill="#b8b8b8"/><path d="M3 5 H15.5 L13 14 H0.5 Z" fill="#f2e070" stroke="#e8b840" stroke-width="0.8"/></svg>
<div class="t" style="left:74.4px;top:87.5px;font-size:12px;color:#2a2a2a;">Open</div>
<svg class="a" style="left:54px;top:109px;" width="16" height="16" viewBox="0 0 16 16"><rect x="0.5" y="0.5" width="15" height="15" fill="#1010d0" stroke="#000080"/><rect x="3" y="1" width="10" height="7" fill="#f8f0c8"/><path d="M4.5 3 H11.5 M4.5 5 H11.5" stroke="#b0a080" stroke-width="0.8"/><rect x="4" y="11" width="8" height="5" fill="#e8e8e8"/><rect x="6" y="12" width="2" height="3" fill="#1010d0"/></svg>
<div class="t" style="left:74.4px;top:109.3px;font-size:12px;color:#2a2a2a;">Save</div>
<svg class="a" style="left:118px;top:80px;" width="16" height="11" viewBox="0 0 16 11"><path d="M5 1 L1 6 L6 9.5 L6 7 Q11 6 14.5 10 Q13 3 6 4 Z" fill="#111"/></svg>
<div class="t" style="left:138.5px;top:78.2px;font-size:12px;color:#2a2a2a;">Undo</div>
<svg class="a" style="left:118px;top:101px;" width="16" height="11" viewBox="0 0 16 11"><path d="M11 1 L15 6 L10 9.5 L10 7 Q5 6 1.5 10 Q3 3 10 4 Z" fill="#8c8c8c"/></svg>
<div class="t" style="left:138.5px;top:99.8px;font-size:12px;color:#9a9a9a;">Redo</div>
<svg class="a" style="left:181px;top:64px;" width="17" height="17" viewBox="0 0 17 17"><path d="M3 2 V14.5 H15" fill="none" stroke="#40b040" stroke-width="0.9"/><path d="M3 14.5 H15" stroke="#f06060" stroke-width="0.9"/><path d="M1.3 4 L3 1.5 L4.7 4" fill="none" stroke="#40b040" stroke-width="0.9"/><path d="M13 12.8 L15.5 14.5 L13 16.2" fill="none" stroke="#f06060" stroke-width="0.9"/><text x="6" y="6.5" font-size="6" font-weight="bold" fill="#40b040" font-family="Liberation Sans">Y</text><text x="11.5" y="12" font-size="6" font-weight="bold" fill="#f06060" font-family="Liberation Sans">x</text></svg>
<svg class="a" style="left:181px;top:87px;" width="17" height="17" viewBox="0 0 17 17"><path d="M3 2 V14.5 H15" fill="none" stroke="#5060f0" stroke-width="0.9"/><path d="M3 14.5 H15" stroke="#f06060" stroke-width="0.9"/><path d="M1.3 4 L3 1.5 L4.7 4" fill="none" stroke="#5060f0" stroke-width="0.9"/><path d="M13 12.8 L15.5 14.5 L13 16.2" fill="none" stroke="#f06060" stroke-width="0.9"/><text x="6" y="6.5" font-size="6" font-weight="bold" fill="#5060f0" font-family="Liberation Sans">Z</text><text x="11.5" y="12" font-size="6" font-weight="bold" fill="#f06060" font-family="Liberation Sans">x</text></svg>
<svg class="a" style="left:181px;top:110px;" width="17" height="17" viewBox="0 0 17 17"><path d="M3 2 V14.5 H15" fill="none" stroke="#5060f0" stroke-width="0.9"/><path d="M3 14.5 H15" stroke="#40b040" stroke-width="0.9"/><path d="M1.3 4 L3 1.5 L4.7 4" fill="none" stroke="#5060f0" stroke-width="0.9"/><path d="M13 12.8 L15.5 14.5 L13 16.2" fill="none" stroke="#40b040" stroke-width="0.9"/><text x="6" y="6.5" font-size="6" font-weight="bold" fill="#5060f0" font-family="Liberation Sans">Z</text><text x="11.5" y="12" font-size="6" font-weight="bold" fill="#40b040" font-family="Liberation Sans">Y</text></svg>
<div class="a" style="left:201px;top:62px;width:22px;height:23px;border:1px solid #3c3c3c;border-radius:2px;background:linear-gradient(180deg,#fee2bc 0%,#ffcf96 56%,#ffa22e 56%,#ffbc40 78%,#ffda5c 100%);box-shadow:inset 0 0 0 1px rgba(255,240,200,0.6);"></div>
<svg class="a" style="left:201px;top:62px;" width="22" height="23" viewBox="0 0 22 23"><path d="M8.5 4 V12.5" stroke="#6060e0" stroke-width="1"/><path d="M8.5 12.5 L15 6" stroke="#40b040" stroke-width="1"/><path d="M8.5 12.5 L14.5 18" stroke="#f04040" stroke-width="1.1"/></svg>
<svg class="a" style="left:204px;top:87px;" width="16" height="17" viewBox="0 0 16 17"><path d="M8 1.5 L14.5 4.5 V12 L8 15.5 L1.5 12 V4.5 Z M1.5 4.5 L8 8 L14.5 4.5 M8 8 V15.5" fill="none" stroke="#707070" stroke-width="0.9"/></svg>
<div class="a" style="left:227px;top:67px;width:1px;height:58px;background:#c0c0c0;"></div>
<svg class="a" style="left:235px;top:68px;" width="32" height="26" viewBox="0 0 32 26"><g opacity="1.0"><path d="M0.2 7.5 L12.2 1.5 L29.5 9.5 L17.5 15.5 Z" fill="#c99a82"/><path d="M0.2 7.5 L17.5 15.5 V18.5 L0.2 10.5 Z" fill="#d6a080"/><path d="M5 9.8 L22 17.8 V24.5 L5 16.8 Z" fill="#d6a080"/><path d="M17.5 15.5 L29.5 9.5 V12.5 L24.5 15 V22 L22 24.5 V18 Z" fill="#7c7c7c"/></g></svg>
<div class="t" style="left:150.0px;top:97.7px;width:200px;text-align:center;font-size:12px;color:#9a9a9a;">Solid</div>
<div class="a" style="left:272px;top:62px;width:67px;height:69px;border:1px solid #3c3c3c;border-radius:2px;background:linear-gradient(180deg,#fee2bc 0%,#ffcf96 56%,#ffa22e 56%,#ffbc40 78%,#ffda5c 100%);box-shadow:inset 0 0 0 1px rgba(255,240,200,0.6);"></div>
<svg class="a" style="left:290px;top:68px;" width="32" height="26" viewBox="0 0 32 26"><g opacity="0.35"><path d="M0.2 7.5 L12.2 1.5 L29.5 9.5 L17.5 15.5 Z" fill="#c99a82"/><path d="M0.2 7.5 L17.5 15.5 V18.5 L0.2 10.5 Z" fill="#d6a080"/><path d="M5 9.8 L22 17.8 V24.5 L5 16.8 Z" fill="#d6a080"/><path d="M17.5 15.5 L29.5 9.5 V12.5 L24.5 15 V22 L22 24.5 V18 Z" fill="#7c7c7c"/></g></svg>
<div class="t" style="left:205.5px;top:97.7px;width:200px;text-align:center;font-size:12px;color:#a08060;">Transparent</div>
<div class="t" style="left:205.5px;top:109.6px;width:200px;text-align:center;font-size:12px;color:#a08060;">model</div>
<div class="a" style="left:343px;top:67px;width:1px;height:58px;background:#c0c0c0;"></div>
<svg class="a" style="left:350px;top:68px;" width="32" height="26" viewBox="0 0 32 26"><g opacity="0.5"><path d="M0.2 7.5 L12.2 1.5 L29.5 9.5 L17.5 15.5 Z" fill="#c99a82"/><path d="M0.2 7.5 L17.5 15.5 V18.5 L0.2 10.5 Z" fill="#d6a080"/><path d="M5 9.8 L22 17.8 V24.5 L5 16.8 Z" fill="#d6a080"/><path d="M17.5 15.5 L29.5 9.5 V12.5 L24.5 15 V22 L22 24.5 V18 Z" fill="#7c7c7c"/></g></svg>
<div class="t" style="left:266.0px;top:97.7px;width:200px;text-align:center;font-size:12px;color:#2a2a2a;">Real</div>
<div class="t" style="left:266.0px;top:109.6px;width:200px;text-align:center;font-size:12px;color:#2a2a2a;">3D</div>
<div class="a" style="left:388px;top:62px;width:40px;height:69px;border:1px solid #3c3c3c;border-radius:2px;background:linear-gradient(180deg,#fee2bc 0%,#ffcf96 56%,#ffa22e 56%,#ffbc40 78%,#ffda5c 100%);box-shadow:inset 0 0 0 1px rgba(255,240,200,0.6);"></div>
<svg class="a" style="left:392px;top:66px;" width="32" height="26" viewBox="0 0 32 26"><g opacity="0.6"><path d="M0.2 7.5 L12.2 1.5 L29.5 9.5 L17.5 15.5 Z" fill="#c99a82"/><path d="M0.2 7.5 L17.5 15.5 V18.5 L0.2 10.5 Z" fill="#d6a080"/><path d="M5 9.8 L22 17.8 V24.5 L5 16.8 Z" fill="#d6a080"/><path d="M17.5 15.5 L29.5 9.5 V12.5 L24.5 15 V22 L22 24.5 V18 Z" fill="#7c7c7c"/></g></svg>
<div class="t" style="left:308.0px;top:97.7px;width:200px;text-align:center;font-size:12px;color:#2a2a2a;">Model</div>
<div class="a" style="left:432px;top:67px;width:1px;height:58px;background:#c0c0c0;"></div>
<div class="a" style="left:436px;top:62px;width:52px;height:23px;border:1px solid #3c3c3c;border-radius:2px;background:linear-gradient(180deg,#fee2bc 0%,#ffcf96 56%,#ffa22e 56%,#ffbc40 78%,#ffda5c 100%);box-shadow:inset 0 0 0 1px rgba(255,240,200,0.6);"></div>
<div class="t" style="left:363.0px;top:65.9px;width:200px;text-align:center;font-size:12px;color:#2a2a2a;">2D view</div>
<div class="t" style="left:363.0px;top:89.1px;width:200px;text-align:center;font-size:12px;color:#2a2a2a;">3D view</div>
<div class="a" style="left:499px;top:65px;width:16px;height:16px;background:#909090;"></div>
<div class="t" style="left:499.3px;top:62.9px;font-size:18px;color:#000;font-weight:bold;">A</div>
<div class="t" style="left:519.3px;top:66.1px;font-size:12px;color:#2a2a2a;">Names</div>
<div class="a" style="left:496px;top:84px;width:110px;height:22px;border:1px solid #3c3c3c;border-radius:2px;background:linear-gradient(180deg,#fee2bc 0%,#ffcf96 56%,#ffa22e 56%,#ffbc40 78%,#ffda5c 100%);box-shadow:inset 0 0 0 1px rgba(255,240,200,0.6);"></div>
<div class="t" style="left:498.0px;top:82.4px;font-size:22px;color:#6a6a6a;font-weight:bold;">R</div>
<div class="t" style="left:519.3px;top:88.4px;font-size:12px;color:#2a2a2a;">Reinforcement</div>
<div class="a" style="left:606px;top:62px;width:38px;height:69px;border:1px solid #3c3c3c;border-radius:2px;background:linear-gradient(180deg,#fee2bc 0%,#ffcf96 56%,#ffa22e 56%,#ffbc40 78%,#ffda5c 100%);box-shadow:inset 0 0 0 1px rgba(255,240,200,0.6);"></div>
<svg class="a" style="left:606px;top:62px;" width="38" height="40" viewBox="0 0 38 40"><path d="M15.4 8 V33.5 M10 27.5 H32" stroke="#e83030" stroke-width="1.2"/></svg>
<div class="t" style="left:525.0px;top:97.7px;width:200px;text-align:center;font-size:12px;color:#2a2a2a;">Grid</div>
<div class="a" style="left:644px;top:62px;width:63px;height:69px;border:1px solid #3c3c3c;border-radius:2px;background:linear-gradient(180deg,#fee2bc 0%,#ffcf96 56%,#ffa22e 56%,#ffbc40 78%,#ffda5c 100%);box-shadow:inset 0 0 0 1px rgba(255,240,200,0.6);"></div>
<svg class="a" style="left:644px;top:62px;" width="63" height="40" viewBox="0 0 63 40"><path d="M17.5 5.4 V34.7 M46 5.4 V34.7" stroke="#1a1a1a" stroke-width="1.4"/><path d="M18 10.5 H45.5" stroke="#1a1a1a" stroke-width="1.2"/><path d="M18 10.5 L24 8 V13 Z M45.5 10.5 L39.5 8 V13 Z" fill="#1a1a1a"/></svg>
<div class="t" style="left:575.5px;top:97.7px;width:200px;text-align:center;font-size:12px;color:#2a2a2a;">Dimension</div>
<div class="t" style="left:575.5px;top:109.6px;width:200px;text-align:center;font-size:12px;color:#2a2a2a;">lines</div>
<svg class="a" style="left:714px;top:62px;" width="80" height="38" viewBox="0 0 80 38"><g transform="translate(0,0)"><rect x="7.3" y="5.2" width="27.3" height="25.4" fill="#f2f2f2" stroke="#a4aabb" stroke-width="1"/><rect x="5.4" y="8.5" width="27.1" height="24.8" fill="#efefef" stroke="#a4aabb" stroke-width="1"/><path d="M7.3 27.3 L14.4 16.5 L16.5 20.6 L23.5 13.3 L28.75 27.3 Z" fill="none" stroke="#f26a1e" stroke-width="1.2" stroke-linejoin="round"/><path d="M11 3.1 V16.7 M4 10 H17.9" stroke="#4d80c4" stroke-width="3.7"/></g><g transform="translate(40,0)"><rect x="7.3" y="5.2" width="27.3" height="25.4" fill="#f2f2f2" stroke="#a4aabb" stroke-width="1"/><rect x="5.4" y="8.5" width="27.1" height="24.8" fill="#efefef" stroke="#a4aabb" stroke-width="1"/><path d="M7.3 27.3 L14.4 16.5 L16.5 20.6 L23.5 13.3 L28.75 27.3 Z" fill="none" stroke="#f26a1e" stroke-width="1.2" stroke-linejoin="round"/><circle cx="10.8" cy="14" r="1.9" fill="none" stroke="#f26a1e" stroke-width="1"/></g></svg>
<div class="t" style="left:634.0px;top:97.2px;width:200px;text-align:center;font-size:12px;color:#2a2a2a;">New</div>
<div class="t" style="left:674.0px;top:97.2px;width:200px;text-align:center;font-size:12px;color:#2a2a2a;">Gallery</div>
<svg class="a" style="left:808px;top:71px;" width="30" height="19" viewBox="0 0 30 19"><g  opacity="1.0"><path d="M1 6.5 H16 V1 L29 9.5 L16 18 V12.5 H1 Z" fill="#f5a060"/><path d="M1 6.5 H16 V1 L29 9.5 L26 9.5 L16 4 V9 H1 Z" fill="#fbc090" opacity="0.7"/><path d="M16 18 L29 9.5 L16 13.5 Z" fill="#e87830" opacity="0.6"/></g></svg>
<div class="t" style="left:723.0px;top:97.2px;width:200px;text-align:center;font-size:12px;color:#2a2a2a;">Create</div>
<svg class="a" style="left:850px;top:71px;" width="30" height="19" viewBox="0 0 30 19"><g transform="translate(30,0) scale(-1,1)" opacity="0.45"><path d="M1 6.5 H16 V1 L29 9.5 L16 18 V12.5 H1 Z" fill="#f5a060"/><path d="M1 6.5 H16 V1 L29 9.5 L26 9.5 L16 4 V9 H1 Z" fill="#fbc090" opacity="0.7"/><path d="M16 18 L29 9.5 L16 13.5 Z" fill="#e87830" opacity="0.6"/></g></svg>
<div class="t" style="left:765.0px;top:97.2px;width:200px;text-align:center;font-size:12px;color:#9a9a9a;">Apply</div>
<svg class="a" style="left:890px;top:66px;" width="16" height="15" viewBox="0 0 16 15"><rect x="0.5" y="0.5" width="15" height="14" fill="#909090" stroke="#404040"/><path d="M0.5 4 H15.5 M0.5 7.5 H15.5 M0.5 11 H15.5 M4.5 0.5 V14.5 M8 0.5 V14.5 M11.5 0.5 V14.5" stroke="#d0d0d0" stroke-width="0.8"/><rect x="0.5" y="0.5" width="15" height="2" fill="#5060c0"/></svg>
<div class="t" style="left:910.5px;top:66.1px;font-size:12px;color:#2a2a2a;">Manager</div>
<svg class="a" style="left:890px;top:88px;" width="16" height="16" viewBox="0 0 16 16"><rect x="0.5" y="0.5" width="15" height="15" fill="#1010d0" stroke="#000080"/><rect x="3" y="1" width="10" height="7" fill="#f8f0c8"/><path d="M4.5 3 H11.5 M4.5 5 H11.5" stroke="#b0a080" stroke-width="0.8"/><rect x="4" y="11" width="8" height="5" fill="#e8e8e8"/><rect x="6" y="12" width="2" height="3" fill="#1010d0"/></svg>
<div class="t" style="left:910.5px;top:88.6px;font-size:12px;color:#2a2a2a;">Save</div>
<svg class="a" style="left:890px;top:112px;" width="16" height="13" viewBox="0 0 16 13"><path d="M1 2 H6 L7.5 3.5 H15 V12.5 H1 Z" fill="#ecd9a0" stroke="#dcc890" stroke-width="0.6"/><path d="M1 5 H15 V12.5 H1 Z" fill="#f2e2b0"/></svg>
<div class="t" style="left:910.5px;top:111.6px;font-size:12px;color:#9a9a9a;">Open</div>
<svg class="a" style="left:974px;top:71px;" width="30" height="19" viewBox="0 0 30 19"><g  opacity="1.0"><path d="M1 6.5 H16 V1 L29 9.5 L16 18 V12.5 H1 Z" fill="#f5a060"/><path d="M1 6.5 H16 V1 L29 9.5 L26 9.5 L16 4 V9 H1 Z" fill="#fbc090" opacity="0.7"/><path d="M16 18 L29 9.5 L16 13.5 Z" fill="#e87830" opacity="0.6"/></g></svg>
<div class="t" style="left:889.0px;top:97.6px;width:200px;text-align:center;font-size:12px;color:#2a2a2a;">Export</div>
<div class="t" style="left:889.0px;top:109.8px;width:200px;text-align:center;font-size:12px;color:#2a2a2a;">IOM</div>
<svg class="a" style="left:1025px;top:69px;" width="24" height="24" viewBox="0 0 24 24"><path d="M7.5 1.5 H1.5 V8.5 M16.5 1.5 H22.5 V8.5 M1.5 15.5 V22.5 H7.5 M22.5 15.5 V22.5 H16.5" fill="none" stroke="#ff5010" stroke-width="2.2"/><path d="M7.5 16.5 L12 5.5 L16.5 16.5" fill="none" stroke="#ff5010" stroke-width="2"/></svg>
<div class="t" style="left:936.0px;top:97.6px;width:200px;text-align:center;font-size:12px;color:#2a2a2a;">Bimplus</div>
<div class="a" style="left:4px;top:159px;width:403px;height:618px;border:1px solid #858585;border-radius:2px;background:#fff;"></div>
<div class="a" style="left:5px;top:160px;width:401px;height:20px;background:#f0f0f0;"></div>
<div class="a" style="left:5px;top:180px;width:401px;height:1px;background:#a0a0a0;"></div>
<div class="t" style="left:8.5px;top:163.1px;font-size:12px;color:#111;">Navigator</div>
<svg class="a" style="left:372px;top:167.5px;" width="9" height="6" viewBox="0 0 9 6"><path d="M0.5 0.5 H8.5 L4.5 5.5 Z" fill="#111"/></svg>
<svg class="a" style="left:391px;top:165px;" width="10" height="12" viewBox="0 0 10 12"><path d="M3 1.5 Q3 0.5 4 0.5 H6 Q7 0.5 7 1.5 V6.5 H8.5 V8 H1.5 V6.5 H3 Z" fill="#111"/><rect x="4.2" y="1.8" width="1.6" height="4.7" fill="#fff"/><path d="M5 8 V11.5" stroke="#111" stroke-width="1.3"/></svg>
<div class="t" style="left:20.3px;top:188.0px;font-size:13px;color:#f06a1c;font-weight:bold;">Current item</div>
<div class="a" style="left:20px;top:208px;width:352px;height:24px;border:1px solid #8c8c8c;border-radius:2px;background:linear-gradient(180deg,#fbfbfb 0%,#f0f0f0 50%,#c9c9c9 52%,#d6d6d6 80%,#e4e4e4 100%);"></div>
<div class="t" style="left:24.5px;top:212.9px;font-size:12px;color:#111;">DRM1</div>
<svg class="a" style="left:361px;top:218px;" width="6" height="4" viewBox="0 0 6 4"><path d="M0 0 H5 L2.5 3.5 Z" fill="#222"/></svg>
<div class="a" style="left:375px;top:208px;width:26px;height:24px;border:1px solid #8c8c8c;border-radius:2px;background:linear-gradient(180deg,#fbfbfb 0%,#f0f0f0 45%,#c9c9c9 47%,#dadada 100%);"></div>
<svg class="a" style="left:375px;top:208px;" width="26" height="24" viewBox="0 0 26 24"><path d="M13 6 V18 M7 12 H19" stroke="#5a8fd8" stroke-width="3.5"/></svg>
<svg class="a" style="left:13px;top:245.5px;" width="8" height="8" viewBox="0 0 8 8"><path d="M7.5 0.5 V7.5 H0.5 Z" fill="#404040"/></svg>
<div class="t" style="left:30.7px;top:242.0px;font-size:12px;color:#111;">Discontinuity Region</div>
<div class="a" style="left:46px;top:260px;width:355px;height:24px;background:#efefef;border:1px solid #dcdcdc;"></div>
<div class="t" style="left:50.5px;top:266.0px;font-size:12px;color:#111;">Geometry</div>
<div class="a" style="left:35px;top:272.9px;width:11px;height:1px;background:#c8c8c8;"></div>
<div class="t" style="left:50.5px;top:288.0px;font-size:12px;color:#111;">Loads</div>
<div class="a" style="left:35px;top:294.9px;width:11px;height:1px;background:#c8c8c8;"></div>
<div class="t" style="left:50.5px;top:310.0px;font-size:12px;color:#111;">Reinforcement</div>
<div class="a" style="left:35px;top:316.9px;width:11px;height:1px;background:#c8c8c8;"></div>
<div class="t" style="left:50.5px;top:332.0px;font-size:12px;color:#111;">Check</div>
<div class="a" style="left:35px;top:338.9px;width:11px;height:1px;background:#c8c8c8;"></div>
<div class="t" style="left:50.5px;top:354.0px;font-size:12px;color:#111;">Bill of material</div>
<div class="a" style="left:35px;top:360.9px;width:11px;height:1px;background:#c8c8c8;"></div>
<div class="a" style="left:35px;top:260px;width:1px;height:101.89999999999998px;background:#c8c8c8;"></div>
<svg class="a" style="left:13px;top:378.5px;" width="8" height="8" viewBox="0 0 8 8"><path d="M7.5 0.5 V7.5 H0.5 Z" fill="#404040"/></svg>
<div class="t" style="left:30.7px;top:376.0px;font-size:12px;color:#111;">Project summary</div>
<div class="t" style="left:50.5px;top:399.6px;font-size:12px;color:#111;">Discontinuity Regions</div>
<div class="a" style="left:35px;top:406.5px;width:11px;height:1px;background:#c8c8c8;"></div>
<div class="t" style="left:50.5px;top:421.6px;font-size:12px;color:#111;">Cross-sections</div>
<div class="a" style="left:35px;top:428.5px;width:11px;height:1px;background:#c8c8c8;"></div>
<div class="t" style="left:50.5px;top:443.6px;font-size:12px;color:#111;">Materials &amp; models</div>
<div class="a" style="left:35px;top:450.5px;width:11px;height:1px;background:#c8c8c8;"></div>
<div class="t" style="left:50.5px;top:465.6px;font-size:12px;color:#111;">Settings</div>
<div class="a" style="left:35px;top:472.5px;width:11px;height:1px;background:#c8c8c8;"></div>
<div class="t" style="left:50.5px;top:487.6px;font-size:12px;color:#111;">Project data</div>
<div class="a" style="left:35px;top:494.5px;width:11px;height:1px;background:#c8c8c8;"></div>
<div class="t" style="left:50.5px;top:509.6px;font-size:12px;color:#111;">Report Preview/Print</div>
<div class="a" style="left:35px;top:516.5px;width:11px;height:1px;background:#c8c8c8;"></div>
<div class="a" style="left:35px;top:394px;width:1px;height:123.5px;background:#c8c8c8;"></div>
<div class="a" style="left:4px;top:781px;width:403px;height:367px;border:1px solid #858585;border-radius:2px;background:#fff;"></div>
<div class="a" style="left:5px;top:782px;width:401px;height:20px;background:#f0f0f0;"></div>
<div class="a" style="left:5px;top:802px;width:401px;height:1px;background:#a0a0a0;"></div>
<div class="t" style="left:8.8px;top:785.1px;font-size:12px;color:#111;">Details</div>
<svg class="a" style="left:372px;top:789.5px;" width="9" height="6" viewBox="0 0 9 6"><path d="M0.5 0.5 H8.5 L4.5 5.5 Z" fill="#111"/></svg>
<svg class="a" style="left:391px;top:786px;" width="10" height="12" viewBox="0 0 10 12"><path d="M3 1.5 Q3 0.5 4 0.5 H6 Q7 0.5 7 1.5 V6.5 H8.5 V8 H1.5 V6.5 H3 Z" fill="#111"/><rect x="4.2" y="1.8" width="1.6" height="4.7" fill="#fff"/><path d="M5 8 V11.5" stroke="#111" stroke-width="1.3"/></svg>
<div class="t" style="left:10.5px;top:809.1px;font-size:12px;color:#111;letter-spacing:-0.6px;">ULS:</div>
<svg class="a" style="left:37.0px;top:806.8px;" width="17.0" height="17.0" viewBox="0 0 17.0 17.0"><defs><radialGradient id="hg45_815" cx="40%" cy="35%" r="70%"><stop offset="0" stop-color="#8fc0ff"/><stop offset="1" stop-color="#2f70f0"/></radialGradient></defs><circle cx="8.5" cy="8.5" r="7.5" fill="url(#hg45_815)" stroke="#2a5ee8" stroke-width="0.8"/><text x="8.5" y="12.8" text-anchor="middle" font-size="12" font-weight="bold" fill="#fff" font-family="Liberation Sans">?</text></svg>
<div class="a" style="left:15px;top:828px;width:210px;height:103px;border:1px solid #8a8a8a;background:#fff;"></div>
<div class="a" style="left:16px;top:829px;width:208px;height:27px;background:linear-gradient(180deg,#7c7c7c 0%,#5e5e5e 40%,#242424 43%,#1e1e1e 55%,#4c4c4c 100%);"></div>
<div class="a" style="left:103px;top:829px;width:1px;height:27px;background:#808080;"></div>
<div class="a" style="left:103px;top:856px;width:1px;height:75px;background:#d4d4d4;"></div>
<div class="a" style="left:123px;top:829px;width:1px;height:27px;background:#808080;"></div>
<div class="a" style="left:123px;top:856px;width:1px;height:75px;background:#d4d4d4;"></div>
<div class="a" style="left:188px;top:829px;width:1px;height:27px;background:#808080;"></div>
<div class="a" style="left:188px;top:856px;width:1px;height:75px;background:#d4d4d4;"></div>
<div class="a" style="left:16px;top:881px;width:208px;height:1px;background:#d4d4d4;"></div>
<div class="a" style="left:16px;top:906px;width:208px;height:1px;background:#d4d4d4;"></div>
<div class="a" style="left:17px;top:856px;width:1px;height:75px;background:#a0a0a0;"></div>
<div class="t" style="left:22.0px;top:835.6px;font-size:12px;color:#fff;">Check item</div>
<div class="t" style="left:129.0px;top:835.6px;font-size:12px;color:#fff;font-weight:bold;">Utilization</div>
<div class="t" style="left:22.0px;top:861.8px;font-size:12px;color:#111;">Concrete</div>
<svg class="a" style="left:198.0px;top:860.5px;" width="16" height="16" viewBox="0 0 16 16"><defs><radialGradient id="hg206_868" cx="40%" cy="35%" r="70%"><stop offset="0" stop-color="#8fc0ff"/><stop offset="1" stop-color="#2f70f0"/></radialGradient></defs><circle cx="8" cy="8" r="7" fill="url(#hg206_868)" stroke="#2a5ee8" stroke-width="0.8"/><text x="8" y="12.3" text-anchor="middle" font-size="12" font-weight="bold" fill="#fff" font-family="Liberation Sans">?</text></svg>
<div class="t" style="left:22.0px;top:886.8px;font-size:12px;color:#111;">Reinforcement</div>
<svg class="a" style="left:198.0px;top:885.5px;" width="16" height="16" viewBox="0 0 16 16"><defs><radialGradient id="hg206_893" cx="40%" cy="35%" r="70%"><stop offset="0" stop-color="#8fc0ff"/><stop offset="1" stop-color="#2f70f0"/></radialGradient></defs><circle cx="8" cy="8" r="7" fill="url(#hg206_893)" stroke="#2a5ee8" stroke-width="0.8"/><text x="8" y="12.3" text-anchor="middle" font-size="12" font-weight="bold" fill="#fff" font-family="Liberation Sans">?</text></svg>
<div class="t" style="left:22.0px;top:911.8px;font-size:12px;color:#111;">Anchorage</div>
<svg class="a" style="left:198.0px;top:910.5px;" width="16" height="16" viewBox="0 0 16 16"><defs><radialGradient id="hg206_918" cx="40%" cy="35%" r="70%"><stop offset="0" stop-color="#8fc0ff"/><stop offset="1" stop-color="#2f70f0"/></radialGradient></defs><circle cx="8" cy="8" r="7" fill="url(#hg206_918)" stroke="#2a5ee8" stroke-width="0.8"/><text x="8" y="12.3" text-anchor="middle" font-size="12" font-weight="bold" fill="#fff" font-family="Liberation Sans">?</text></svg>
<div class="t" style="left:10.5px;top:937.6px;font-size:12px;color:#111;letter-spacing:-0.6px;">SLS:</div>
<svg class="a" style="left:35.0px;top:935.3px;" width="17.0" height="17.0" viewBox="0 0 17.0 17.0"><defs><radialGradient id="hg43_943" cx="40%" cy="35%" r="70%"><stop offset="0" stop-color="#8fc0ff"/><stop offset="1" stop-color="#2f70f0"/></radialGradient></defs><circle cx="8.5" cy="8.5" r="7.5" fill="url(#hg43_943)" stroke="#2a5ee8" stroke-width="0.8"/><text x="8.5" y="12.8" text-anchor="middle" font-size="12" font-weight="bold" fill="#fff" font-family="Liberation Sans">?</text></svg>
<div class="a" style="left:15px;top:957px;width:216px;height:53px;border:1px solid #8a8a8a;background:#fff;"></div>
<div class="a" style="left:16px;top:958px;width:214px;height:27px;background:linear-gradient(180deg,#7c7c7c 0%,#5e5e5e 40%,#242424 43%,#1e1e1e 55%,#4c4c4c 100%);"></div>
<div class="a" style="left:109px;top:958px;width:1px;height:27px;background:#808080;"></div>
<div class="a" style="left:109px;top:985px;width:1px;height:25px;background:#d4d4d4;"></div>
<div class="a" style="left:129px;top:958px;width:1px;height:27px;background:#808080;"></div>
<div class="a" style="left:129px;top:985px;width:1px;height:25px;background:#d4d4d4;"></div>
<div class="a" style="left:194px;top:958px;width:1px;height:27px;background:#808080;"></div>
<div class="a" style="left:194px;top:985px;width:1px;height:25px;background:#d4d4d4;"></div>
<div class="a" style="left:17px;top:985px;width:1px;height:25px;background:#a0a0a0;"></div>
<div class="t" style="left:22.0px;top:964.6px;font-size:12px;color:#fff;">Check item</div>
<div class="t" style="left:135.0px;top:964.6px;font-size:12px;color:#fff;font-weight:bold;">Utilization</div>
<div class="t" style="left:22.0px;top:990.8px;font-size:12px;color:#111;">Stress limitation</div>
<svg class="a" style="left:204.0px;top:989.5px;" width="16" height="16" viewBox="0 0 16 16"><defs><radialGradient id="hg212_997" cx="40%" cy="35%" r="70%"><stop offset="0" stop-color="#8fc0ff"/><stop offset="1" stop-color="#2f70f0"/></radialGradient></defs><circle cx="8" cy="8" r="7" fill="url(#hg212_997)" stroke="#2a5ee8" stroke-width="0.8"/><text x="8" y="12.3" text-anchor="middle" font-size="12" font-weight="bold" fill="#fff" font-family="Liberation Sans">?</text></svg>
<div class="a" style="left:411px;top:158px;width:36px;height:23px;border:1px solid #858585;border-bottom:none;border-radius:3px 3px 0 0;background:#fbfbfb;"></div>
<div class="t" style="left:416.5px;top:163.6px;font-size:12px;color:#111;">Data</div>
<div class="a" style="left:411px;top:180px;width:630px;height:968px;border:1px solid #858585;border-radius:2px;background:#fff;"></div>
<div class="a" style="left:412px;top:180px;width:34px;height:1px;background:#fbfbfb;"></div>
<div class="a" style="left:414px;top:183px;width:624px;height:962px;border:1px solid #f0f0f0;"></div>
<div class="a" style="left:416px;top:184px;width:620px;height:959px;border:1px solid #858585;background:#fff;"></div>
<svg class="a" style="left:540px;top:220px;" width="230" height="170" viewBox="0 0 230 170">
<g transform="translate(-540,-220)">
<path d="M569.5 263.5 L577.5 255.5 H717.5 L709.5 263.5 Z" fill="#f4a070" stroke="#111" stroke-width="1"/>
<path d="M709.5 263.5 L717.5 255.5 V350.5 L709.5 359.5 Z" fill="#f4a070" stroke="#111" stroke-width="1"/>
<rect x="569.5" y="263.5" width="140" height="96" fill="#f4a070" stroke="#111" stroke-width="1"/>
<g stroke="#7a7a7a" stroke-width="0.8" fill="none">
<path d="M569.5 366 V384 M709.5 366 V384 M569.5 378.5 H709.5"/>
<path d="M566 382 L573 375 M706 382 L713 375"/>
<path d="M723 255.5 H741 M723 350.5 H741 M735 255.5 V350.5"/>
<path d="M731 252 L739 259 M731 347 L739 354"/>
<path d="M580.6 242.4 H605.2 M580.6 242.4 L561.5 261"/>
<path d="M564.6 244.3 L574.4 253 M557.1 253.5 L565.6 261.6 M571.6 246 V255.8 M563.4 254.9 V264.7"/>
</g>
<text x="639.5" y="374" text-anchor="middle" font-size="14" fill="#111" font-family="Liberation Sans">W</text>
<text x="745.5" y="309" text-anchor="middle" font-size="14" fill="#111" font-family="Liberation Sans">H</text>
<text x="594" y="239.5" text-anchor="middle" font-size="14" fill="#111" font-family="Liberation Sans">T</text>
</g></svg>
<svg class="a" style="left:760px;top:260px;" width="150" height="120" viewBox="0 0 150 120">
<g transform="translate(-760,-260)">
<path d="M781.5 277.5 H883.5 V349.5 H848.5 V299.5 H822.5 V349.5 H781.5 Z" fill="#f4a070" stroke="#111" stroke-width="1"/>
<circle cx="781.5" cy="277.5" r="2.3" fill="none" stroke="#777" stroke-width="0.8"/><circle cx="831.5" cy="277.5" r="2.3" fill="none" stroke="#777" stroke-width="0.8"/><circle cx="883.5" cy="277.5" r="2.3" fill="none" stroke="#777" stroke-width="0.8"/><circle cx="781.5" cy="313.5" r="2.3" fill="none" stroke="#777" stroke-width="0.8"/><circle cx="883.5" cy="313.5" r="2.3" fill="none" stroke="#777" stroke-width="0.8"/><circle cx="781.5" cy="349.5" r="2.3" fill="none" stroke="#777" stroke-width="0.8"/><circle cx="883.5" cy="349.5" r="2.3" fill="none" stroke="#777" stroke-width="0.8"/><circle cx="831.5" cy="349.5" r="2.3" fill="none" stroke="#777" stroke-width="0.8"/><circle cx="831.5" cy="302.5" r="2.3" fill="none" stroke="#777" stroke-width="0.8"/><circle cx="831.5" cy="313.5" r="2.3" fill="none" stroke="#777" stroke-width="0.8"/>
<circle cx="865" cy="314.5" r="8" fill="none" stroke="#111" stroke-width="0.9"/>
<text x="865" y="319.5" text-anchor="middle" font-size="13" fill="#111" font-family="Liberation Sans">M</text>
<text x="789.5" y="291.5" text-anchor="middle" font-size="14" fill="#111" font-family="Liberation Sans">4</text><text x="840" y="291.5" text-anchor="middle" font-size="14" fill="#111" font-family="Liberation Sans">7</text><text x="889.5" y="291.5" text-anchor="middle" font-size="14" fill="#111" font-family="Liberation Sans">3</text><text x="840" y="308.5" text-anchor="middle" font-size="14" fill="#111" font-family="Liberation Sans">0</text><text x="789.5" y="327.5" text-anchor="middle" font-size="14" fill="#111" font-family="Liberation Sans">8</text><text x="840" y="327.5" text-anchor="middle" font-size="14" fill="#111" font-family="Liberation Sans">9</text><text x="889.5" y="327.5" text-anchor="middle" font-size="14" fill="#111" font-family="Liberation Sans">6</text><text x="788.5" y="362.5" text-anchor="middle" font-size="14" fill="#111" font-family="Liberation Sans">1</text><text x="840" y="362.5" text-anchor="middle" font-size="14" fill="#111" font-family="Liberation Sans">5</text><text x="889.5" y="362.5" text-anchor="middle" font-size="14" fill="#111" font-family="Liberation Sans">2</text>
</g></svg>
<div class="t" style="left:423.0px;top:447.1px;font-size:13px;color:#f06a1c;font-weight:bold;">Subregions &amp; Details</div>
<div class="a" style="left:569px;top:443px;width:26px;height:21px;border:1px solid #7a7a7a;border-radius:2px;background:linear-gradient(180deg,#fcfcfc 0%,#eeeeee 45%,#cfcfcf 50%,#dedede 100%);"></div>
<svg class="a" style="left:569px;top:443px;" width="26" height="21" viewBox="0 0 26 21"><path d="M13 4 V17 M6.5 10.5 H19.5" stroke="#5a8fd8" stroke-width="3.5"/></svg>
<div class="a" style="left:600px;top:443px;width:26px;height:21px;border:1px solid #7a7a7a;border-radius:2px;background:linear-gradient(180deg,#fcfcfc 0%,#eeeeee 45%,#cfcfcf 50%,#dedede 100%);"></div>
<svg class="a" style="left:600px;top:443px;" width="26" height="21" viewBox="0 0 26 21"><path d="M7.5 5 L18.5 16 M18.5 5 L7.5 16" stroke="#e83c3c" stroke-width="3.2"/></svg>
<div class="a" style="left:631px;top:445px;width:48px;height:18px;border:1px solid #7a7a7a;border-radius:2px;background:linear-gradient(180deg,#fcfcfc 0%,#eeeeee 45%,#cfcfcf 50%,#dedede 100%);"></div>
<div class="t" style="left:555.0px;top:447.7px;width:200px;text-align:center;font-size:12px;color:#111;">Copy</div>
<div class="a" style="left:685px;top:445px;width:68px;height:18px;border:1px solid #7a7a7a;border-radius:2px;background:linear-gradient(180deg,#fcfcfc 0%,#eeeeee 45%,#cfcfcf 50%,#dedede 100%);"></div>
<div class="t" style="left:619.0px;top:447.7px;width:200px;text-align:center;font-size:12px;color:#111;">Delete all</div>
<div class="a" style="left:759px;top:445px;width:80px;height:18px;border:1px solid #e8c040;border-radius:2px;background:linear-gradient(180deg,#fcfcfc 0%,#eeeeee 45%,#cfcfcf 50%,#dedede 100%);"></div>
<div class="t" style="left:699.0px;top:447.7px;width:200px;text-align:center;font-size:12px;color:#111;">Import DXF</div>
<div class="a" style="left:753px;top:438px;width:93px;height:30px;border:4px solid #ea0010;border-radius:8px;"></div>
<div class="a" style="left:418px;top:468px;width:228px;height:204px;border:1px solid #8a8a8a;background:#fff;"></div>
<div class="a" style="left:419px;top:469px;width:226px;height:27px;background:linear-gradient(180deg,#7c7c7c 0%,#5e5e5e 40%,#242424 43%,#1e1e1e 55%,#4c4c4c 100%);"></div>
<div class="a" style="left:443px;top:469px;width:1px;height:27px;background:#7a7a7a;"></div>
<div class="a" style="left:543px;top:469px;width:1px;height:27px;background:#7a7a7a;"></div>
<div class="t" style="left:449.4px;top:476.1px;font-size:12px;color:#fff;">Name</div>
<div class="t" style="left:548.5px;top:476.1px;font-size:12px;color:#fff;">Type</div>
<svg class="a" style="left:527px;top:475px;" width="12" height="14" viewBox="0 0 12 14"><path d="M0.5 0.5 H11 L7 6 V12.5 L5 10.5 V6 Z" fill="#e8e8e8" stroke="#555" stroke-width="0.6"/></svg>
<svg class="a" style="left:627px;top:475px;" width="12" height="14" viewBox="0 0 12 14"><path d="M0.5 0.5 H11 L7 6 V12.5 L5 10.5 V6 Z" fill="#e8e8e8" stroke="#555" stroke-width="0.6"/></svg>
<div class="a" style="left:419px;top:496px;width:226px;height:175px;background:#e4e4e4;"></div>
<div class="a" style="left:419px;top:496px;width:226px;height:1px;background:#c8c8c8;"></div>
<svg class="a" style="left:428px;top:504px;" width="10" height="7" viewBox="0 0 10 7"><path d="M1 6 L5 2 L9 6" fill="none" stroke="#111" stroke-width="1.5"/></svg>
<div class="t" style="left:444.2px;top:500.5px;font-size:12px;color:#111;">Model</div>
<div class="a" style="left:443px;top:520px;width:202px;height:50px;background:#fff;border-top:1px solid #a8a8a8;"></div>
<div class="a" style="left:444px;top:521px;width:200px;height:24px;background:#eeeeee;"></div>
<div class="a" style="left:445px;top:522px;width:97px;height:23px;border:1px solid #8a8a8a;background:#f0f0f0;"></div>
<div class="a" style="left:443px;top:545px;width:202px;height:1px;background:#d8d8d8;"></div>
<div class="a" style="left:543px;top:521px;width:1px;height:49px;background:#d8d8d8;"></div>
<div class="t" style="left:449.4px;top:526.9px;font-size:12px;color:#111;">W1</div>
<div class="t" style="left:548.5px;top:526.9px;font-size:12px;color:#111;">Wall</div>
<div class="t" style="left:449.4px;top:551.9px;font-size:12px;color:#111;">O2</div>
<div class="t" style="left:548.5px;top:551.9px;font-size:12px;color:#111;">Opening</div>
<div class="a" style="left:419px;top:570px;width:226px;height:1px;background:#a8a8a8;"></div>
<svg class="a" style="left:428px;top:579px;" width="10" height="7" viewBox="0 0 10 7"><path d="M1 6 L5 2 L9 6" fill="none" stroke="#111" stroke-width="1.5"/></svg>
<div class="t" style="left:444.2px;top:576.1px;font-size:12px;color:#111;">Supports</div>
<div class="a" style="left:443px;top:595px;width:202px;height:76px;background:#fff;border-top:1px solid #a8a8a8;"></div>
<div class="t" style="left:449.4px;top:601.6px;font-size:12px;color:#111;">LS1</div>
<div class="t" style="left:549.4px;top:601.6px;font-size:12px;color:#111;">Line support</div>
<div class="t" style="left:449.4px;top:626.6px;font-size:12px;color:#111;">LS2</div>
<div class="t" style="left:549.4px;top:626.6px;font-size:12px;color:#111;">Line support</div>
<div class="t" style="left:449.4px;top:651.6px;font-size:12px;color:#111;">LS3</div>
<div class="t" style="left:549.4px;top:651.6px;font-size:12px;color:#111;">Line support</div>
<div class="a" style="left:443px;top:620px;width:202px;height:1px;background:#d0d0d0;"></div>
<div class="a" style="left:443px;top:645px;width:202px;height:1px;background:#d0d0d0;"></div>
<div class="a" style="left:543px;top:596px;width:1px;height:75px;background:#d0d0d0;"></div>
<div class="a" style="left:443px;top:596px;width:1px;height:75px;background:#a8a8a8;"></div>
<div class="a" style="left:652px;top:469px;width:301px;height:269px;border:1px solid #8a8a8a;border-bottom:none;background:#fff;"></div>
<div class="a" style="left:653px;top:470px;width:299px;height:24px;background:#e4e4e4;"></div>
<div class="a" style="left:653px;top:494px;width:299px;height:1px;background:#a8a8a8;"></div>
<div class="t" style="left:686.7px;top:474.8px;font-size:12px;color:#3a3a3a;">Wall</div>
<div class="a" style="left:653px;top:495px;width:24px;height:168px;background:#e4e4e4;"></div>
<div class="a" style="left:676px;top:495px;width:1px;height:168px;background:#a8a8a8;"></div>
<div class="a" style="left:653px;top:663px;width:299px;height:26px;background:#e4e4e4;border-top:1px solid #a8a8a8;border-bottom:1px solid #a8a8a8;"></div>
<div class="t" style="left:686.7px;top:670.1px;font-size:12px;color:#3a3a3a;">Position</div>
<div class="a" style="left:653px;top:689px;width:24px;height:49px;background:#e4e4e4;"></div>
<div class="a" style="left:676px;top:689px;width:1px;height:49px;background:#a8a8a8;"></div>
<div class="t" style="left:687.4px;top:500.8px;font-size:12px;color:#111;">Shape</div>
<div class="a" style="left:787px;top:496px;width:162px;height:22px;border:1px solid #8c8c8c;border-radius:2px;background:linear-gradient(180deg,#fbfbfb 0%,#f0f0f0 48%,#c9c9c9 50%,#d8d8d8 85%,#e6e6e6 100%);"></div>
<div class="t" style="left:791.0px;top:500.6px;font-size:12px;color:#111;">Rectangular</div>
<svg class="a" style="left:938px;top:505px;" width="6" height="4" viewBox="0 0 6 4"><path d="M0 0 H5 L2.5 3.5 Z" fill="#222"/></svg>
<div class="t" style="left:687.4px;top:524.8px;font-size:12px;color:#111;">W - Width [m]</div>
<div class="a" style="left:786px;top:520px;width:164px;height:22px;border:1px solid #a8a8a8;border-radius:2px;background:#fff;"></div>
<div class="t" style="left:791.0px;top:524.6px;font-size:12px;color:#111;">5.00</div>
<div class="t" style="left:687.4px;top:548.8px;font-size:12px;color:#111;">H - Height [m]</div>
<div class="a" style="left:786px;top:544px;width:164px;height:22px;border:1px solid #a8a8a8;border-radius:2px;background:#fff;"></div>
<div class="t" style="left:791.0px;top:548.6px;font-size:12px;color:#111;">3.00</div>
<div class="t" style="left:687.4px;top:572.8px;font-size:12px;color:#111;">O1 - Offset 1 [m]</div>
<div class="a" style="left:786px;top:568px;width:164px;height:22px;border:1px solid #a8a8a8;border-radius:2px;background:#fff;"></div>
<div class="t" style="left:791.0px;top:572.6px;font-size:12px;color:#111;">0.00</div>
<div class="t" style="left:687.4px;top:596.8px;font-size:12px;color:#111;">O2 - Offset 2 [m]</div>
<div class="a" style="left:786px;top:592px;width:164px;height:22px;border:1px solid #a8a8a8;border-radius:2px;background:#fff;"></div>
<div class="t" style="left:791.0px;top:596.6px;font-size:12px;color:#111;">0.00</div>
<div class="t" style="left:687.4px;top:620.8px;font-size:12px;color:#111;">T - Thickness [m]</div>
<div class="a" style="left:786px;top:616px;width:164px;height:22px;border:1px solid #a8a8a8;border-radius:2px;background:#fff;"></div>
<div class="t" style="left:791.0px;top:620.6px;font-size:12px;color:#111;">0.20</div>
<div class="t" style="left:687.4px;top:644.8px;font-size:12px;color:#111;">Material</div>
<div class="a" style="left:787px;top:640px;width:140px;height:22px;border:1px solid #8c8c8c;border-radius:2px;background:linear-gradient(180deg,#fbfbfb 0%,#f0f0f0 48%,#c9c9c9 50%,#d8d8d8 85%,#e6e6e6 100%);"></div>
<div class="t" style="left:791.0px;top:644.6px;font-size:12px;color:#111;">C30/37</div>
<svg class="a" style="left:916px;top:649px;" width="6" height="4" viewBox="0 0 6 4"><path d="M0 0 H5 L2.5 3.5 Z" fill="#222"/></svg>
<div class="a" style="left:930px;top:640px;width:20px;height:22px;border:1px solid #a0a0a0;border-radius:2px;background:linear-gradient(180deg,#fafafa,#dcdcdc);"></div>
<svg class="a" style="left:930px;top:640px;" width="20" height="22" viewBox="0 0 20 22"><path d="M4.5 10 A5.5 5.5 0 0 1 14.5 8" fill="none" stroke="#30a040" stroke-width="2.2"/><path d="M15.5 12 A5.5 5.5 0 0 1 5.5 14" fill="none" stroke="#30a040" stroke-width="2.2"/><path d="M12 5.5 L16.5 5.5 L15.5 10 Z M8 16.5 L3.5 16.5 L4.5 12 Z" fill="#30a040"/></svg>
<div class="t" style="left:687.4px;top:696.1px;font-size:12px;color:#111;">X - position [m]</div>
<div class="a" style="left:786px;top:691px;width:164px;height:22px;border:1px solid #a8a8a8;border-radius:2px;background:#fff;"></div>
<div class="t" style="left:791.0px;top:695.6px;font-size:12px;color:#111;">0.00</div>
<div class="t" style="left:687.4px;top:720.1px;font-size:12px;color:#111;">Z - position [m]</div>
<div class="a" style="left:786px;top:715px;width:164px;height:22px;border:1px solid #a8a8a8;border-radius:2px;background:#fff;"></div>
<div class="t" style="left:791.0px;top:719.6px;font-size:12px;color:#111;">0.00</div>
<div class="a" style="left:1045px;top:157px;width:39px;height:24px;border:1px solid #858585;border-bottom:none;border-radius:3px 3px 0 0;background:#fbfbfb;"></div>
<div class="t" style="left:1051.5px;top:163.1px;font-size:12px;color:#111;">Main</div>
<div class="a" style="left:1045px;top:180px;width:871px;height:968px;border:1px solid #858585;border-radius:2px;background:#fff;"></div>
<div class="a" style="left:1046px;top:180px;width:37px;height:1px;background:#fbfbfb;"></div>
<div class="a" style="left:1048px;top:183px;width:865px;height:962px;border:1px solid #f0f0f0;"></div>
<div class="a" style="left:1050px;top:184px;width:861px;height:959px;border:1px solid #858585;background:#fff;"></div>
<div class="a" style="left:1054px;top:188px;width:24px;height:24px;border:1px solid #b8b8b8;background:linear-gradient(180deg,#f0f0f0,#d8d8d8);"></div>
<svg class="a" style="left:1054px;top:188px;" width="24" height="24" viewBox="0 0 24 24"><g stroke="#6a6a6a" stroke-width="1.1" fill="none"><path d="M5 4.5 L9 8.5 M5 4.5 H8 M5 4.5 V7.5"/><path d="M19.5 4.5 L15.5 8.5 M19.5 4.5 H16.5 M19.5 4.5 V7.5"/><path d="M5 18.5 L9 14.5 M5 18.5 H8 M5 18.5 V15.5"/><path d="M19.5 18.5 L15.5 14.5 M19.5 18.5 H16.5 M19.5 18.5 V15.5"/></g></svg>
<svg class="a" style="left:0px;top:0px;pointer-events:none;" width="1920" height="1152" viewBox="0 0 1920 1152"><path d="M1123.8 424 V920" stroke="#a8a8a8" stroke-width="1" stroke-dasharray="1 3.7"/>
<path d="M1242.6 424 V920" stroke="#a8a8a8" stroke-width="1" stroke-dasharray="1 3.7"/>
<path d="M1302.0 424 V920" stroke="#b0b0b0" stroke-width="1" stroke-dasharray="12 5 1 4" stroke-dashoffset="-2"/>
<path d="M1361.4 424 V920" stroke="#a8a8a8" stroke-width="1" stroke-dasharray="1 3.7"/>
<path d="M1420.8 424 V920" stroke="#b0b0b0" stroke-width="1" stroke-dasharray="12 5 1 4" stroke-dashoffset="-2"/>
<path d="M1480.2 424 V920" stroke="#a8a8a8" stroke-width="1" stroke-dasharray="1 3.7"/>
<path d="M1539.6 424 V920" stroke="#b0b0b0" stroke-width="1" stroke-dasharray="12 5 1 4" stroke-dashoffset="-2"/>
<path d="M1599.0 424 V920" stroke="#a8a8a8" stroke-width="1" stroke-dasharray="1 3.7"/>
<path d="M1658.4 424 V920" stroke="#b0b0b0" stroke-width="1" stroke-dasharray="12 5 1 4" stroke-dashoffset="-2"/>
<path d="M1717.8 424 V920" stroke="#a8a8a8" stroke-width="1" stroke-dasharray="1 3.7"/>
<path d="M1777.2 424 V920" stroke="#b0b0b0" stroke-width="1" stroke-dasharray="12 5 1 4" stroke-dashoffset="-2"/>
<path d="M1836.6 424 V920" stroke="#a8a8a8" stroke-width="1" stroke-dasharray="1 3.7"/>
<path d="M1112 907.4 H1848" stroke="#a8a8a8" stroke-width="1" stroke-dasharray="1 3.7"/>
<path d="M1112 788.6 H1848" stroke="#a8a8a8" stroke-width="1" stroke-dasharray="1 3.7"/>
<path d="M1124 729.2 H1848" stroke="#a0a0a0" stroke-width="1" stroke-dasharray="12 5 1 4" stroke-dashoffset="-11"/>
<path d="M1112 669.8 H1848" stroke="#a8a8a8" stroke-width="1" stroke-dasharray="1 3.7"/>
<path d="M1124 610.4 H1848" stroke="#a0a0a0" stroke-width="1" stroke-dasharray="12 5 1 4" stroke-dashoffset="-11"/>
<path d="M1112 551.0 H1848" stroke="#a8a8a8" stroke-width="1" stroke-dasharray="1 3.7"/>
<path d="M1124 491.6 H1848" stroke="#a0a0a0" stroke-width="1" stroke-dasharray="12 5 1 4" stroke-dashoffset="-11"/>
<path d="M1112 432.2 H1848" stroke="#a8a8a8" stroke-width="1" stroke-dasharray="1 3.7"/>
<path d="M1112 848.0 H1124" stroke="#8a8a8a" stroke-width="1"/>
<text x="1111.8" y="851.6" text-anchor="end" font-size="9.5" fill="#111" font-family="Liberation Sans">0.00</text>
<path d="M1112 729.2 H1124" stroke="#8a8a8a" stroke-width="1"/>
<text x="1111.8" y="732.8" text-anchor="end" font-size="9.5" fill="#111" font-family="Liberation Sans">1.00</text>
<path d="M1112 610.4 H1124" stroke="#8a8a8a" stroke-width="1"/>
<text x="1111.8" y="614.0" text-anchor="end" font-size="9.5" fill="#111" font-family="Liberation Sans">2.00</text>
<path d="M1112 491.6 H1124" stroke="#8a8a8a" stroke-width="1"/>
<text x="1111.8" y="495.2" text-anchor="end" font-size="9.5" fill="#111" font-family="Liberation Sans">3.00</text>
<path d="M1183.2 907 V918" stroke="#111" stroke-width="1"/>
<text x="1183.2" y="927.5" text-anchor="middle" font-size="9.5" fill="#111" font-family="Liberation Sans">0.00</text>
<path d="M1302.0 907 V918" stroke="#a0a0a0" stroke-width="1"/>
<text x="1302.0" y="927.5" text-anchor="middle" font-size="9.5" fill="#111" font-family="Liberation Sans">1.00</text>
<path d="M1420.8 907 V918" stroke="#a0a0a0" stroke-width="1"/>
<text x="1420.8" y="927.5" text-anchor="middle" font-size="9.5" fill="#111" font-family="Liberation Sans">2.00</text>
<path d="M1539.6 907 V918" stroke="#a0a0a0" stroke-width="1"/>
<text x="1539.6" y="927.5" text-anchor="middle" font-size="9.5" fill="#111" font-family="Liberation Sans">3.00</text>
<path d="M1658.4 907 V918" stroke="#a0a0a0" stroke-width="1"/>
<text x="1658.4" y="927.5" text-anchor="middle" font-size="9.5" fill="#111" font-family="Liberation Sans">4.00</text>
<path d="M1777.2 907 V918" stroke="#a0a0a0" stroke-width="1"/>
<text x="1777.2" y="927.5" text-anchor="middle" font-size="9.5" fill="#111" font-family="Liberation Sans">5.00</text>
<path d="M1183.2 431 V920" stroke="#1a1a1a" stroke-width="1.2" stroke-dasharray="12 5 1 4" stroke-dashoffset="-3"/>
<path d="M1124 848.0 H1842" stroke="#6a6a6a" stroke-width="1.6" stroke-dasharray="12 5 1 4" stroke-dashoffset="-11"/>
<path d="M1179.4 427.5 L1183.4 409.4 L1187.5 427.5 Z" fill="#000"/>
<text x="1183.4" y="406" text-anchor="middle" font-size="12" fill="#111" font-family="Liberation Sans">z</text>
<path d="M1841.8 844.5 L1859.5 848 L1841.8 851.8 Z" fill="#000"/>
<text x="1861" y="848.5" font-size="12" fill="#111" font-family="Liberation Sans">x</text>
<path d="M1183.2 491.6 H1777.2 V848.0 H1183.2 Z M1539.6 848.0 V610.4 H1658.4 V848.0 Z" fill="#c8c8c8" fill-rule="evenodd"/>
<path d="M1195.4 494 V845 M1213.2 494 V845 M1231.0 494 V845 M1248.8 494 V845 M1266.7 494 V845 M1284.5 494 V845 M1302.3 494 V845 M1320.1 494 V845 M1337.9 494 V845 M1355.7 494 V845 M1373.5 494 V845 M1391.3 494 V845 M1409.2 494 V845 M1427.0 494 V845 M1444.8 494 V845 M1462.6 494 V845 M1480.4 494 V845 M1498.2 494 V845 M1516.0 494 V845 M1533.8 494 V845 M1551.7 494 V607.6 M1569.5 494 V607.6 M1587.3 494 V607.6 M1605.1 494 V607.6 M1622.9 494 V607.6 M1640.7 494 V607.6 M1658.5 494 V607.6 M1676.3 494 V845 M1694.2 494 V845 M1712.0 494 V845 M1729.8 494 V845 M1747.6 494 V845 M1765.4 494 V845 M1185.8 509.4 H1775 M1185.8 527.2 H1775 M1185.8 545.1 H1775 M1185.8 562.9 H1775 M1185.8 580.8 H1775 M1185.8 598.6 H1775 M1185.8 616.4 H1537.5 M1660.4 616.4 H1775 M1185.8 634.3 H1537.5 M1660.4 634.3 H1775 M1185.8 652.1 H1537.5 M1660.4 652.1 H1775 M1185.8 670.0 H1537.5 M1660.4 670.0 H1775 M1185.8 687.8 H1537.5 M1660.4 687.8 H1775 M1185.8 705.6 H1537.5 M1660.4 705.6 H1775 M1185.8 723.5 H1537.5 M1660.4 723.5 H1775 M1185.8 741.3 H1537.5 M1660.4 741.3 H1775 M1185.8 759.2 H1537.5 M1660.4 759.2 H1775 M1185.8 777.0 H1537.5 M1660.4 777.0 H1775 M1185.8 794.8 H1537.5 M1660.4 794.8 H1775 M1185.8 812.7 H1537.5 M1660.4 812.7 H1775 M1185.8 830.5 H1537.5 M1660.4 830.5 H1775 M1536.7 607.6 V845 M1661.5 607.6 V845 M1474 670 L1600 544.5" stroke="#a83232" stroke-width="1.3" fill="none" opacity="0.9"/>
<path d="M1185.8 495 H1775 M1185.8 607.6 H1775 M1185.8 845 H1530 Q1536.7 845 1536.7 838 M1661.5 838 Q1661.5 845 1668 845 H1775" stroke="#a83232" stroke-width="2" fill="none" opacity="0.85"/>
<path d="M1183.2 848.0 V491.6 H1777.2 V848.0 Z" fill="none" stroke="#ff6a00" stroke-width="2.2"/>
<path d="M1539.6 848.0 V610.4 H1658.4 V848.0" fill="none" stroke="#111" stroke-width="2.5"/>
<path d="M1183.2 848.0 H1777.2" stroke="#ff6a00" stroke-width="2.2"/>
<path d="M1242.6 849.8 L1249.9 858.5 H1235.3 Z" fill="#fff" stroke="#0a0a78" stroke-width="2"/>
<path d="M1242.6 861 V877" stroke="#0a0a78" stroke-width="2"/><path d="M1240.8 867 L1242.6 862 L1244.4 867 Z" fill="#0a0a78"/>
<path d="M1272.3 849.8 L1279.6 858.5 H1265.0 Z" fill="#fff" stroke="#0a0a78" stroke-width="2"/>
<path d="M1272.3 861 V877" stroke="#0a0a78" stroke-width="2"/><path d="M1270.5 867 L1272.3 862 L1274.1 867 Z" fill="#0a0a78"/>
<path d="M1302.0 849.8 L1309.3 858.5 H1294.7 Z" fill="#fff" stroke="#0a0a78" stroke-width="2"/>
<path d="M1302.0 861 V877" stroke="#0a0a78" stroke-width="2"/><path d="M1300.2 867 L1302.0 862 L1303.8 867 Z" fill="#0a0a78"/>
<path d="M1456.4 849.6 L1464.0 858.3 H1448.8 Z" fill="#fff" stroke="#0a0a78" stroke-width="2"/>
<path d="M1448.2 861 H1464.6" stroke="#0a0a78" stroke-width="2"/>
<path d="M1456.4 864 V882.5" stroke="#0a0a78" stroke-width="2"/><path d="M1454.6 871 L1456.4 865 L1458.2 871 Z" fill="#0a0a78"/>
<path d="M1486.1 849.6 L1493.7 858.3 H1478.5 Z" fill="#fff" stroke="#0a0a78" stroke-width="2"/>
<path d="M1477.9 861 H1494.3" stroke="#0a0a78" stroke-width="2"/>
<path d="M1486.1 864 V882.5" stroke="#0a0a78" stroke-width="2"/><path d="M1484.3 871 L1486.1 865 L1487.9 871 Z" fill="#0a0a78"/>
<path d="M1515.8 849.6 L1523.4 858.3 H1508.2 Z" fill="#fff" stroke="#0a0a78" stroke-width="2"/>
<path d="M1507.6 861 H1524.0" stroke="#0a0a78" stroke-width="2"/>
<path d="M1515.8 864 V882.5" stroke="#0a0a78" stroke-width="2"/><path d="M1514.0 871 L1515.8 865 L1517.6 871 Z" fill="#0a0a78"/>
<path d="M1658.4 849.6 L1666.0 858.3 H1650.8 Z" fill="#fff" stroke="#0a0a78" stroke-width="2"/>
<path d="M1650.2 861 H1666.6" stroke="#0a0a78" stroke-width="2"/>
<path d="M1658.4 864 V882.5" stroke="#0a0a78" stroke-width="2"/><path d="M1656.6 871 L1658.4 865 L1660.2 871 Z" fill="#0a0a78"/>
<path d="M1688.1 849.6 L1695.7 858.3 H1680.5 Z" fill="#fff" stroke="#0a0a78" stroke-width="2"/>
<path d="M1679.9 861 H1696.3" stroke="#0a0a78" stroke-width="2"/>
<path d="M1688.1 864 V882.5" stroke="#0a0a78" stroke-width="2"/><path d="M1686.3 871 L1688.1 865 L1689.9 871 Z" fill="#0a0a78"/>
<path d="M1717.8 849.6 L1725.4 858.3 H1710.2 Z" fill="#fff" stroke="#0a0a78" stroke-width="2"/>
<path d="M1709.6 861 H1726.0" stroke="#0a0a78" stroke-width="2"/>
<path d="M1717.8 864 V882.5" stroke="#0a0a78" stroke-width="2"/><path d="M1716.0 871 L1717.8 865 L1719.6 871 Z" fill="#0a0a78"/>
<path d="M1747.5 849.6 L1755.1 858.3 H1739.9 Z" fill="#fff" stroke="#0a0a78" stroke-width="2"/>
<path d="M1739.3 861 H1755.7" stroke="#0a0a78" stroke-width="2"/>
<path d="M1747.5 864 V882.5" stroke="#0a0a78" stroke-width="2"/><path d="M1745.7 871 L1747.5 865 L1749.3 871 Z" fill="#0a0a78"/>
<path d="M1777.2 849.6 L1784.8 858.3 H1769.6 Z" fill="#fff" stroke="#0a0a78" stroke-width="2"/>
<path d="M1769.0 861 H1785.4" stroke="#0a0a78" stroke-width="2"/>
<path d="M1777.2 864 V882.5" stroke="#0a0a78" stroke-width="2"/><path d="M1775.4 871 L1777.2 865 L1779.0 871 Z" fill="#0a0a78"/>
<path d="M1183.2 886 H1777.2" stroke="#6a6a6a" stroke-width="2"/>
<path d="M1183.2 862 V897 M1777.2 882 V897" stroke="#111" stroke-width="1"/>
<path d="M1179 890 L1187.5 881.5 M1772.9 890 L1781.5 881.5" stroke="#111" stroke-width="2"/>
<text x="1480" y="881" text-anchor="middle" font-size="13" fill="#111" font-family="Liberation Sans">5.00</text>
<path d="M1815 491.5 V848" stroke="#6a6a6a" stroke-width="2"/>
<path d="M1795 491.5 H1832 M1795 848 H1832" stroke="#555" stroke-width="1.2"/>
<path d="M1810.5 487 L1819.5 496 M1810.5 843.5 L1819.5 852.5" stroke="#111" stroke-width="2"/>
<text x="0" y="0" transform="translate(1809.8 670) rotate(-90)" text-anchor="middle" font-size="13" fill="#111" font-family="Liberation Sans">3.00</text></svg>
</body></html>
